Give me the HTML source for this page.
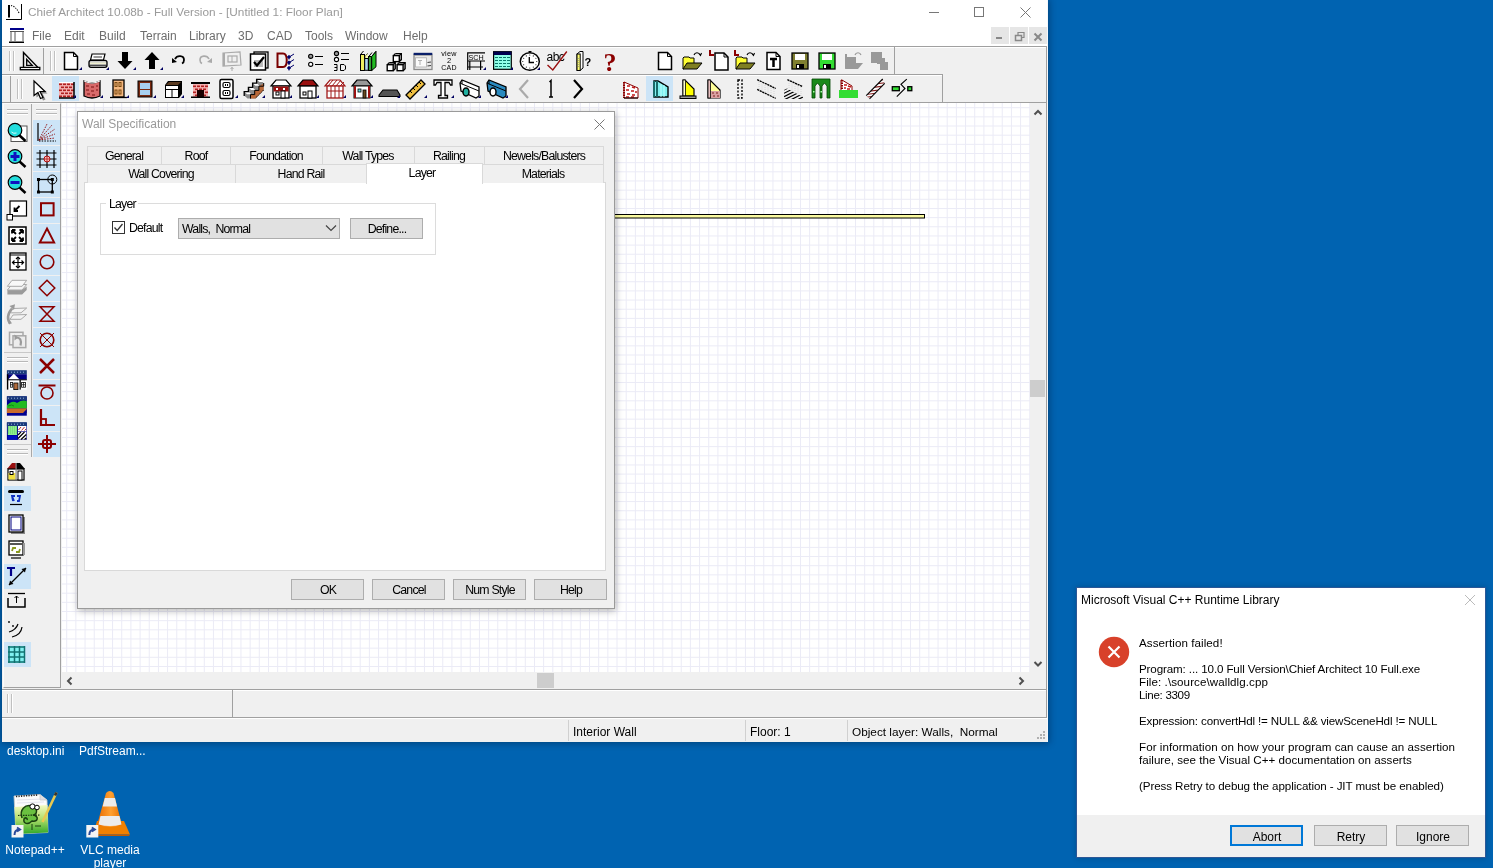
<!DOCTYPE html><html><head><meta charset="utf-8"><style>
html,body{margin:0;padding:0;}
body{width:1493px;height:868px;overflow:hidden;position:relative;background:#0063b1;font-family:"Liberation Sans", sans-serif;}
div{box-sizing:border-box;}
svg{position:absolute;overflow:visible;}
.t{will-change:transform;}
</style></head><body>
<div style="position:absolute;left:2px;top:0px;width:1046px;height:742px;background:#f0f0f0;box-shadow:0 0 7px 1px rgba(0,20,50,0.45);"></div>
<div style="position:absolute;left:1047px;top:0px;width:1px;height:742px;background:#f4f8fc;"></div>
<div style="position:absolute;left:2px;top:0px;width:1045px;height:46px;background:#fff;"></div>
<svg style="left:0px;top:0px;" width="30" height="24" viewBox="0 0 30 24"><path d="M9,5 L9,17.5" stroke="#000" stroke-width="2"/><path d="M6,19.5 L21.5,19.5 L21.5,4" fill="none" stroke="#000" stroke-width="1"/><path d="M11,5.5 Q16,6.5 19,13" fill="none" stroke="#000" stroke-width="1.1" stroke-dasharray="1.2 1.3"/></svg>
<div class="t" style="position:absolute;left:27.5px;top:7.02px;font-size:11.8px;line-height:11.8px;height:14.2px;color:#9a9a9a;white-space:pre;">Chief Architect 10.08b - Full Version - [Untitled 1: Floor Plan]</div>
<div style="position:absolute;left:929px;top:12px;width:10px;height:1px;background:#777;"></div>
<div style="position:absolute;left:974px;top:7px;width:10px;height:10px;border:1px solid #777;"></div>
<svg style="left:1020px;top:7px;" width="11" height="11" viewBox="0 0 11 11"><path d="M0.5,0.5 L10.5,10.5 M10.5,0.5 L0.5,10.5" stroke="#777" stroke-width="1"/></svg>
<svg style="left:8px;top:27px;" width="18" height="17" viewBox="0 0 18 17"><rect x="2" y="1" width="14" height="2" fill="#00008b"/><path d="M2,4.5 L16,4.5 M3,4.5 L3,14 M7,4.5 L7,14 M15,4.5 L15,14" stroke="#555" stroke-width="1"/><rect x="1" y="14.5" width="15" height="1.5" fill="#000"/></svg>
<div class="t" style="position:absolute;left:31.8px;top:29.94px;font-size:12px;line-height:12px;height:14.4px;color:#6d6d6d;white-space:pre;">File</div>
<div class="t" style="position:absolute;left:63.7px;top:29.94px;font-size:12px;line-height:12px;height:14.4px;color:#6d6d6d;white-space:pre;">Edit</div>
<div class="t" style="position:absolute;left:98.6px;top:29.94px;font-size:12px;line-height:12px;height:14.4px;color:#6d6d6d;white-space:pre;">Build</div>
<div class="t" style="position:absolute;left:139.6px;top:29.94px;font-size:12px;line-height:12px;height:14.4px;color:#6d6d6d;white-space:pre;">Terrain</div>
<div class="t" style="position:absolute;left:188.5px;top:29.94px;font-size:12px;line-height:12px;height:14.4px;color:#6d6d6d;white-space:pre;">Library</div>
<div class="t" style="position:absolute;left:238px;top:29.94px;font-size:12px;line-height:12px;height:14.4px;color:#6d6d6d;white-space:pre;">3D</div>
<div class="t" style="position:absolute;left:266.6px;top:29.94px;font-size:12px;line-height:12px;height:14.4px;color:#6d6d6d;white-space:pre;">CAD</div>
<div class="t" style="position:absolute;left:305.4px;top:29.94px;font-size:12px;line-height:12px;height:14.4px;color:#6d6d6d;white-space:pre;">Tools</div>
<div class="t" style="position:absolute;left:345.4px;top:29.94px;font-size:12px;line-height:12px;height:14.4px;color:#6d6d6d;white-space:pre;">Window</div>
<div class="t" style="position:absolute;left:403.4px;top:29.94px;font-size:12px;line-height:12px;height:14.4px;color:#6d6d6d;white-space:pre;">Help</div>
<div style="position:absolute;left:991px;top:27px;width:17.5px;height:17px;background:#e6e6e6;"></div>
<div style="position:absolute;left:1010px;top:27px;width:17.5px;height:17px;background:#e6e6e6;"></div>
<div style="position:absolute;left:1029px;top:27px;width:17.5px;height:17px;background:#e6e6e6;"></div>
<div style="position:absolute;left:996px;top:37px;width:6px;height:2px;background:#888;"></div>
<svg style="left:1014px;top:31px;" width="12" height="11" viewBox="0 0 12 11"><rect x="1.5" y="4.5" width="6" height="5" fill="none" stroke="#888" stroke-width="1.5"/><path d="M4,4 L4,1.5 L10,1.5 L10,6.5 L8,6.5" fill="none" stroke="#888" stroke-width="1.2"/></svg>
<svg style="left:1033px;top:32px;" width="10" height="10" viewBox="0 0 10 10"><path d="M1.5,1.5 L8.5,8.5 M8.5,1.5 L1.5,8.5" stroke="#888" stroke-width="2"/></svg>
<div style="position:absolute;left:2px;top:46px;width:1045px;height:1px;background:#a0a0a0;"></div>
<div style="position:absolute;left:2px;top:47px;width:1044px;height:1px;background:#fff;"></div>
<div style="position:absolute;left:2px;top:74px;width:941px;height:1px;background:#a0a0a0;"></div>
<div style="position:absolute;left:2px;top:75px;width:940px;height:1px;background:#fff;"></div>
<div style="position:absolute;left:894px;top:47px;width:1px;height:28px;background:#a0a0a0;"></div>
<div style="position:absolute;left:942px;top:74px;width:1px;height:28px;background:#a0a0a0;"></div>
<div style="position:absolute;left:1046px;top:47px;width:1px;height:56px;background:#a0a0a0;"></div>
<div style="position:absolute;left:2px;top:102px;width:1045px;height:1px;background:#a0a0a0;"></div>
<div style="position:absolute;left:43px;top:48px;width:1px;height:26px;background:#a0a0a0;"></div>
<div style="position:absolute;left:10px;top:76px;width:1px;height:26px;background:#a0a0a0;"></div>
<div style="position:absolute;left:9px;top:51px;width:1px;height:20px;background:#c0c0c0;"></div><div style="position:absolute;left:10px;top:51px;width:1px;height:20px;background:#fff;"></div><div style="position:absolute;left:13px;top:51px;width:1px;height:20px;background:#c0c0c0;"></div><div style="position:absolute;left:14px;top:51px;width:1px;height:20px;background:#fff;"></div>
<div style="position:absolute;left:50px;top:51px;width:1px;height:20px;background:#c0c0c0;"></div><div style="position:absolute;left:51px;top:51px;width:1px;height:20px;background:#fff;"></div><div style="position:absolute;left:54px;top:51px;width:1px;height:20px;background:#c0c0c0;"></div><div style="position:absolute;left:55px;top:51px;width:1px;height:20px;background:#fff;"></div>
<div style="position:absolute;left:17px;top:79px;width:1px;height:20px;background:#c0c0c0;"></div><div style="position:absolute;left:18px;top:79px;width:1px;height:20px;background:#fff;"></div><div style="position:absolute;left:21px;top:79px;width:1px;height:20px;background:#c0c0c0;"></div><div style="position:absolute;left:22px;top:79px;width:1px;height:20px;background:#fff;"></div>
<div style="position:absolute;left:52px;top:76px;width:27px;height:25px;background:#cce4f7;"></div>
<div style="position:absolute;left:646px;top:76px;width:27px;height:25px;background:#cce4f7;"></div>
<svg style="left:18px;top:49px;" width="24" height="24" viewBox="0 0 24 24"><path d="M5.5,3.5 L5.5,18.6 L20,18.6 Z" fill="none" stroke="#000" stroke-width="1.4" stroke-linejoin="miter"/><path d="M8.7,10.5 L8.7,16.4 L14.2,16.4 Z" fill="none" stroke="#000" stroke-width="1.3"/><rect x="2.3" y="18.4" width="19.5" height="2.3" fill="#fff" stroke="#000" stroke-width="1.3"/></svg>
<svg style="left:59px;top:49px;" width="24" height="24" viewBox="0 0 24 24"><path d="M5.5,3.5 L14.5,3.5 L18.5,7.5 L18.5,20.5 L5.5,20.5 Z" fill="#fff" stroke="#000" stroke-width="1.5"/><path d="M14.5,3.5 L14.5,7.5 L18.5,7.5" fill="none" stroke="#000" stroke-width="1"/><path d="M20,21 L23,21 L23,18 Z" fill="#000060"/></svg>
<svg style="left:86px;top:49px;" width="24" height="24" viewBox="0 0 24 24"><path d="M6,5 L19,5 L17.5,11 L4.5,11 Z" fill="#fff" stroke="#000" stroke-width="1.2"/><path d="M7.5,8 L16,8" stroke="#000" stroke-width="0.8"/><rect x="3" y="11.3" width="18" height="7" rx="2" fill="#c8c8c8" stroke="#000" stroke-width="1.3"/><rect x="4" y="13.5" width="16" height="1.6" fill="#f0f0d0"/><path d="M3.5,16.3 L20.5,16.3" stroke="#000" stroke-width="0.8"/><path d="M20,21 L23,21 L23,18 Z" fill="#000060"/></svg>
<svg style="left:113px;top:49px;" width="24" height="24" viewBox="0 0 24 24"><path d="M9,3 L15,3 L15,12 L19.5,12 L12,20 L4.5,12 L9,12 Z" fill="#000"/><path d="M20,21 L23,21 L23,18 Z" fill="#000060"/></svg>
<svg style="left:140px;top:49px;" width="24" height="24" viewBox="0 0 24 24"><path d="M12,3 L19.5,11 L15,11 L15,20 L9,20 L9,11 L4.5,11 Z" fill="#000"/><path d="M20,21 L23,21 L23,18 Z" fill="#000060"/></svg>
<svg style="left:167px;top:49px;" width="24" height="24" viewBox="0 0 24 24"><path d="M8,10 C10,6 17,6 17,11 C17,13 16,14 15,14.5" fill="none" stroke="#000" stroke-width="1.8"/><path d="M5,9 L10,13 L5,14 Z" fill="#000"/></svg>
<svg style="left:193px;top:49px;" width="24" height="24" viewBox="0 0 24 24"><path d="M16,10 C14,6 7,6 7,11 C7,13 8,14 9,14.5" fill="none" stroke="#aaa" stroke-width="1.6"/><path d="M19,9 L14,13 L19,14 Z" fill="#aaa"/></svg>
<svg style="left:220px;top:49px;" width="24" height="24" viewBox="0 0 24 24"><path d="M3,4 L20,3 L21,16 L3,17 Z" fill="none" stroke="#aaa" stroke-width="1.2"/><rect x="3" y="4" width="2" height="13" fill="#aaa"/><rect x="8" y="7" width="9" height="6" fill="none" stroke="#aaa" stroke-width="1.2"/><line x1="12" y1="7" x2="12" y2="13" stroke="#aaa"/><path d="M12,18 L12,22 M10.5,20 L12,18.5 L13.5,20" stroke="#aaa" fill="none"/></svg>
<svg style="left:247px;top:49px;" width="24" height="24" viewBox="0 0 24 24"><rect x="7" y="3" width="14" height="16" fill="#fff" stroke="#000" stroke-width="1.3"/><rect x="3.5" y="5" width="15" height="16" fill="#fff" stroke="#000" stroke-width="1.5"/><rect x="7" y="11" width="9" height="7" fill="#bbb"/><path d="M7,13 L10,16.5 L17,8" fill="none" stroke="#000" stroke-width="2.2"/></svg>
<svg style="left:274px;top:49px;" width="24" height="24" viewBox="0 0 24 24"><path d="M3.5,4.5 L9,4.5 C14,4.5 14,18 9,18 L3.5,18 Z" fill="none" stroke="#7a0000" stroke-width="2"/><g fill="#00006b" stroke="#00006b" stroke-width="1"><circle cx="15" cy="8" r="1.3"/><circle cx="15" cy="13.5" r="1.3"/><circle cx="15" cy="19" r="1.3"/><path d="M15,9.5 L15,10.5 M15,15 L15,16 M15,20.5 L15,21.5" /><path d="M16,7.5 L20,5 M16,13 L20,10.5 M16,18.5 L20,16" fill="none"/></g></svg>
<svg style="left:301px;top:49px;" width="24" height="24" viewBox="0 0 24 24"><circle cx="9.7" cy="7.3" r="2.1" fill="#999" stroke="#000" stroke-width="1.1"/><circle cx="9.7" cy="15.3" r="2.1" fill="#fff" stroke="#000" stroke-width="1.1"/><path d="M14,7.5 L22,7.5 M14,15.5 L22,15.5" stroke="#000" stroke-width="1"/></svg>
<svg style="left:328px;top:49px;" width="24" height="24" viewBox="0 0 24 24"><circle cx="8.5" cy="4.5" r="2.1" fill="#999" stroke="#000" stroke-width="1.1"/><circle cx="8.5" cy="10.5" r="2.1" fill="#fff" stroke="#000" stroke-width="1.1"/><path d="M13,4.5 L21,4.5 M13,10.5 L21,10.5" stroke="#000" stroke-width="1"/><path d="M6,15.5 L9,15.5 L9,21.5 L6,21.5 M6.5,18.5 L9,18.5" fill="none" stroke="#000" stroke-width="1"/><path d="M12.5,15.5 L16,15.5 L17.5,17 L17.5,20 L16,21.5 L12.5,21.5 Z" fill="none" stroke="#000" stroke-width="1"/></svg>
<svg style="left:357px;top:49px;" width="24" height="24" viewBox="0 0 24 24"><path d="M3.5,5.5 L6.5,2 M7.5,9.5 L8,8 L10.5,4.5 M11.8,7.5 L15,3.5 M14.7,7.5 L19,2.2" stroke="#000" stroke-width="1" fill="none"/><path d="M8,8 L10.5,4.5 L10.5,9" fill="#ffff90"/><rect x="3.5" y="5.5" width="4" height="16" fill="#f0f060" stroke="#000" stroke-width="1"/><rect x="7.7" y="9.5" width="3.6" height="11.8" fill="#b0d8f0" stroke="#000" stroke-width="1"/><rect x="11.5" y="7.5" width="3.2" height="14" fill="#3a9a3a" stroke="#000" stroke-width="1"/><path d="M14.7,7.5 L19,2.5 L19,17.8 L14.7,21.5 Z" fill="#22bb22" stroke="#000" stroke-width="1"/></svg>
<svg style="left:383.5px;top:49px;" width="24" height="24" viewBox="0 0 24 24"><path d="M11.3,4.6 L17.3,4.6 L17.3,10.6 L15.3,12.6" fill="none" stroke="#000" stroke-width="1.4"/><rect x="9.3" y="6.6" width="6" height="6" fill="#fff" stroke="#000" stroke-width="1.4"/><path d="M9.8,6.1 L11.3,4.6 M15.3,6.6 L17.3,4.6" stroke="#000" stroke-width="1.2"/><path d="M5.2,13.7 L11.2,13.7 L11.2,19.7 L9.2,21.7" fill="none" stroke="#000" stroke-width="1.4"/><rect x="3.2" y="15.7" width="6" height="6" fill="#fff" stroke="#000" stroke-width="1.4"/><path d="M3.7,15.2 L5.2,13.7 M9.2,15.7 L11.2,13.7" stroke="#000" stroke-width="1.2"/><path d="M15.1,13.7 L21.1,13.7 L21.1,19.7 L19.1,21.7" fill="none" stroke="#000" stroke-width="1.4"/><rect x="13.1" y="15.7" width="6" height="6" fill="#fff" stroke="#000" stroke-width="1.4"/><path d="M13.6,15.2 L15.1,13.7 M19.1,15.7 L21.1,13.7" stroke="#000" stroke-width="1.2"/></svg>
<svg style="left:410.5px;top:49px;" width="24" height="24" viewBox="0 0 24 24"><rect x="3" y="6" width="18" height="14.5" fill="#e8e8e8" stroke="#8a8a8a" stroke-width="1.3"/><rect x="2.6" y="3.8" width="18.7" height="2.2" fill="#0a1f6a"/><rect x="4.5" y="8.8" width="11" height="9.2" fill="#fafafa" stroke="#aaa" stroke-width="0.8"/><path d="M7,11.5 L11,11.5 M9,11.5 L9,16" stroke="#b0b0b0" stroke-width="1"/><path d="M16.5,13.5 L20,13 M16.5,17 L20,16.5" stroke="#444" stroke-width="1.2"/></svg>
<svg class="t" style="left:436px;top:49px;" width="24" height="24" viewBox="0 0 24 24"><text x="13" y="6.8" font-family="Liberation Sans" fill="#000" text-anchor="middle" font-size="7.2" letter-spacing="0.3">view</text><text x="13" y="14.3" font-family="Liberation Sans" fill="#000" text-anchor="middle" font-size="7.5">2</text><text x="13" y="21.2" font-family="Liberation Sans" fill="#000" text-anchor="middle" font-size="7" letter-spacing="0.2">CAD</text></svg>
<svg class="t" style="left:463px;top:49px;" width="24" height="24" viewBox="0 0 24 24"><path d="M4.7,3.8 L22,3.8 M4.7,3.3 L4.7,21 M4.7,12 L22,12 M4.7,18 L20,18 M6.8,12.5 L6.8,21 M17.6,12.5 L17.6,21" stroke="#000" stroke-width="1.2" fill="none"/><text x="13" y="10.6" text-anchor="middle" font-family="Liberation Sans" font-size="7.2" fill="#000">SCH</text><path d="M20,21 L23,21 L23,18 Z" fill="#000060"/></svg>
<svg style="left:490px;top:49px;" width="24" height="24" viewBox="0 0 24 24"><rect x="3.6" y="2.7" width="17.7" height="17.6" fill="#90ffe8" stroke="#000" stroke-width="1.2"/><rect x="3.6" y="2.7" width="17.7" height="3.3" fill="#000050"/><path d="M5,8.5 L20,8.5 M5,11.5 L20,11.5 M5,14.5 L20,14.5 M5,17.5 L20,17.5" stroke="#0a7a6a" stroke-width="1" stroke-dasharray="3 1"/><path d="M20,21 L23,21 L23,18 Z" fill="#000060"/></svg>
<svg style="left:517px;top:49px;" width="24" height="24" viewBox="0 0 24 24"><ellipse cx="12.8" cy="12.5" rx="9.5" ry="8.8" fill="#fff" stroke="#000" stroke-width="1.5"/><path d="M11.5,2.5 L14.5,2.5 M13,2.5 L13,4" stroke="#000" stroke-width="1.2"/><circle cx="12.8" cy="6.0" r="0.55" fill="#000"/><circle cx="16.3" cy="6.9" r="0.55" fill="#000"/><circle cx="18.9" cy="9.2" r="0.55" fill="#000"/><circle cx="19.8" cy="12.5" r="0.55" fill="#000"/><circle cx="18.9" cy="15.7" r="0.55" fill="#000"/><circle cx="16.3" cy="18.1" r="0.55" fill="#000"/><circle cx="12.8" cy="19.0" r="0.55" fill="#000"/><circle cx="9.3" cy="18.1" r="0.55" fill="#000"/><circle cx="6.7" cy="15.8" r="0.55" fill="#000"/><circle cx="5.8" cy="12.5" r="0.55" fill="#000"/><circle cx="6.7" cy="9.2" r="0.55" fill="#000"/><circle cx="9.3" cy="6.9" r="0.55" fill="#000"/><path d="M12.3,8 L12.3,13.5 L17,13.5" fill="none" stroke="#000" stroke-width="1.3"/><path d="M20,21 L23,21 L23,18 Z" fill="#000060"/></svg>
<svg class="t" style="left:544px;top:49px;" width="24" height="24" viewBox="0 0 24 24"><text x="2.5" y="12" font-family="Liberation Sans" font-size="12" letter-spacing="-0.5" fill="#000">abc</text><path d="M3.5,16.1 L8.8,21 L22.8,2.5" fill="none" stroke="#9a1010" stroke-width="1.4"/></svg>
<svg class="t" style="left:573px;top:49px;" width="24" height="24" viewBox="0 0 24 24"><path d="M4,5 L7,2.5 L10,2.5 L10,19 L7,21.5 L4,21.5 Z" fill="#fff" stroke="#000" stroke-width="1"/><rect x="4" y="5" width="3.2" height="16.5" fill="#ffff70" stroke="#000" stroke-width="1"/><path d="M5.5,9 L5.5,18" stroke="#999" stroke-width="0.8" stroke-dasharray="1 1"/><text x="11.5" y="17" font-family="Liberation Sans" font-weight="bold" font-size="11" fill="#000">?</text></svg>
<svg class="t" style="left:598px;top:49px;" width="24" height="24" viewBox="0 0 24 24"><text x="12" y="21.5" text-anchor="middle" font-family="Liberation Serif" font-weight="bold" font-size="26" fill="#8b0000">?</text></svg>
<svg style="left:653px;top:49px;" width="24" height="24" viewBox="0 0 24 24"><path d="M5.5,3.5 L14.5,3.5 L18.5,7.5 L18.5,20.5 L5.5,20.5 Z" fill="#fff" stroke="#000" stroke-width="1.5"/><path d="M14.5,3.5 L14.5,7.5 L18.5,7.5" fill="none" stroke="#000" stroke-width="1"/></svg>
<svg style="left:680px;top:49px;" width="24" height="24" viewBox="0 0 24 24"><path d="M3,9 L4,8 L9,8 L10,9 L14,9 L14,15 L3,20 Z" fill="#ffff33" stroke="#000" stroke-width="1"/><path d="M3,20 L7,14 L22,14 L17,20 Z" fill="#7f7f22" stroke="#000" stroke-width="1"/><path d="M14,6 C15,3 19,3 20,6 M19,4.5 L20.5,6.5 L21.5,4" fill="none" stroke="#000" stroke-width="1.1"/></svg>
<svg style="left:708px;top:49px;" width="24" height="24" viewBox="0 0 24 24"><path d="M2,1 L2,6 L6,6" fill="none" stroke="#8b0000" stroke-width="2"/><path d="M7,4 L16,4 L20,8 L20,21 L7,21 Z" fill="#fff" stroke="#000" stroke-width="1.5"/><path d="M16,4 L16,8 L20,8" fill="none" stroke="#000" stroke-width="1"/></svg>
<svg style="left:733px;top:49px;" width="24" height="24" viewBox="0 0 24 24"><path d="M2,1 L2,6 L6,6" fill="none" stroke="#8b0000" stroke-width="2"/><path d="M3,9 L4,8 L9,8 L10,9 L14,9 L14,15 L3,20 Z" fill="#ffff33" stroke="#000" stroke-width="1"/><path d="M3,20 L7,14 L22,14 L17,20 Z" fill="#7f7f22" stroke="#000" stroke-width="1"/><path d="M14,6 C15,3 19,3 20,6 M19,4.5 L20.5,6.5 L21.5,4" fill="none" stroke="#000" stroke-width="1.1"/></svg>
<svg style="left:761.5px;top:49px;" width="24" height="24" viewBox="0 0 24 24"><path d="M5,3.5 L14,3.5 L18,7.5 L18,20.5 L5,20.5 Z" fill="#fff" stroke="#000" stroke-width="1.5"/><path d="M14,3.5 L14,7.5 L18,7.5" fill="none" stroke="#000" stroke-width="1"/><path d="M8,10 L15,10 M11.5,10 L11.5,18" stroke="#000" stroke-width="2.5"/></svg>
<svg style="left:788px;top:49px;" width="24" height="24" viewBox="0 0 24 24"><rect x="4" y="4" width="16" height="16" fill="#7f7f30" stroke="#000" stroke-width="1.3"/><rect x="7" y="5" width="10" height="6" fill="#fff"/><rect x="8" y="15" width="8" height="5" fill="#000"/><rect x="9" y="16" width="2" height="3" fill="#fff"/></svg>
<svg style="left:815px;top:49px;" width="24" height="24" viewBox="0 0 24 24"><rect x="4" y="4" width="16" height="16" fill="#33dd33" stroke="#000" stroke-width="1.3"/><rect x="7" y="5" width="10" height="6" fill="#fff"/><rect x="8" y="15" width="8" height="5" fill="#000"/><rect x="9" y="16" width="2" height="3" fill="#fff"/></svg>
<svg style="left:841px;top:49px;" width="24" height="24" viewBox="0 0 24 24"><path d="M4,7 L4,5 L6,5 L6,8 L15,8 L15,14 L4,20 Z" fill="#999"/><path d="M4,20 L8,14 L22,14 L17,20 Z" fill="#999"/><path d="M14,6 C15,3 19,3 20,6" fill="none" stroke="#999" stroke-width="1.2"/></svg>
<svg style="left:868px;top:49px;" width="24" height="24" viewBox="0 0 24 24"><path d="M3,3 L14,3 L14,9 L17,9 L17,13 L20,13 L20,21 L12,21 L12,15 L9,15 L9,14 L3,14 Z" fill="#999"/></svg>
<svg style="left:27px;top:77px;" width="24" height="24" viewBox="0 0 24 24"><path d="M7,4 L19,15 L14,15 L17,21 L14.5,22 L12,16 L8,19 Z" fill="#888" transform="translate(1.5,1.5)"/><path d="M7,4 L18,14.5 L13,14.5 L16,20.5 L13.5,21.5 L11,15.5 L7,18.5 Z" fill="#fff" stroke="#000" stroke-width="1.2"/></svg>
<svg style="left:53px;top:77px;" width="24" height="24" viewBox="0 0 24 24"><rect x="6" y="5" width="15" height="16" fill="#f4b0b0"/><rect x="6" y="6.5" width="3" height="1.6" fill="#b02020"/><rect x="10" y="6.5" width="3" height="1.6" fill="#b02020"/><rect x="14" y="6.5" width="3" height="1.6" fill="#b02020"/><rect x="18" y="6.5" width="3" height="1.6" fill="#b02020"/><rect x="8" y="9.5" width="3" height="1.6" fill="#b02020"/><rect x="12" y="9.5" width="3" height="1.6" fill="#b02020"/><rect x="16" y="9.5" width="3" height="1.6" fill="#b02020"/><rect x="6" y="12.5" width="3" height="1.6" fill="#b02020"/><rect x="10" y="12.5" width="3" height="1.6" fill="#b02020"/><rect x="14" y="12.5" width="3" height="1.6" fill="#b02020"/><rect x="18" y="12.5" width="3" height="1.6" fill="#b02020"/><rect x="8" y="15.5" width="3" height="1.6" fill="#b02020"/><rect x="12" y="15.5" width="3" height="1.6" fill="#b02020"/><rect x="16" y="15.5" width="3" height="1.6" fill="#b02020"/><rect x="6" y="18.5" width="3" height="1.6" fill="#b02020"/><rect x="10" y="18.5" width="3" height="1.6" fill="#b02020"/><rect x="14" y="18.5" width="3" height="1.6" fill="#b02020"/><rect x="18" y="18.5" width="3" height="1.6" fill="#b02020"/><rect x="6" y="5" width="15" height="1" fill="#fff"/><path d="M21,5 L21,21 L6,21" fill="none" stroke="#000" stroke-width="1.5"/><path d="M20,21 L23,21 L23,18 Z" fill="#000060"/></svg>
<svg style="left:80px;top:77px;" width="24" height="24" viewBox="0 0 24 24"><path d="M4,4 Q12,8 20,4 L20,19 Q12,23 4,19 Z" fill="#d86a6a" stroke="#000" stroke-width="1.3"/><path d="M6,9 L9,9 M11,10 L14,10 M16,9 L18,9 M6,13 L9,13 M11,14 L14,14 M16,13 L18,13 M7,17 L10,17 M12,18 L15,18" stroke="#7a1010" stroke-width="1.2"/><path d="M4,4 Q12,8 20,4" fill="none" stroke="#fff" stroke-width="1"/><path d="M20,21 L23,21 L23,18 Z" fill="#000060"/></svg>
<svg style="left:106px;top:77px;" width="24" height="24" viewBox="0 0 24 24"><rect x="7" y="3" width="11" height="17" fill="#f5b880" stroke="#000" stroke-width="1.3"/><path d="M4,20.5 L21,20.5" stroke="#000" stroke-width="1.3"/><rect x="9" y="5.5" width="2" height="4" fill="none" stroke="#7a4a10"/><rect x="13" y="5.5" width="2" height="4" fill="none" stroke="#7a4a10"/><rect x="9" y="13" width="2" height="4" fill="none" stroke="#7a4a10"/><rect x="13" y="13" width="2" height="4" fill="none" stroke="#7a4a10"/><path d="M20,21 L23,21 L23,18 Z" fill="#000060"/></svg>
<svg style="left:133px;top:77px;" width="24" height="24" viewBox="0 0 24 24"><rect x="5" y="4" width="14" height="16" fill="#7a2a10" stroke="#000" stroke-width="1"/><rect x="7" y="6" width="10" height="6" fill="#a8d0f0"/><rect x="7" y="13" width="10" height="5" fill="#a8d0f0"/><path d="M20,21 L23,21 L23,18 Z" fill="#000060"/></svg>
<svg style="left:161px;top:77px;" width="24" height="24" viewBox="0 0 24 24"><path d="M4,8 L7,4 L21,4 L21,17 L18,21 L4,21 Z" fill="#000"/><path d="M5,8 L8,5 L20,5 L17,8 Z" fill="#5a3a20"/><rect x="5" y="9" width="12" height="3" fill="#fff"/><rect x="5" y="13" width="5.5" height="7" fill="#fff"/><rect x="11.5" y="13" width="5.5" height="7" fill="#fff"/><path d="M20,21 L23,21 L23,18 Z" fill="#000060"/></svg>
<svg style="left:188px;top:77px;" width="24" height="24" viewBox="0 0 24 24"><rect x="5" y="7" width="15" height="13" fill="#f4b0b0"/><rect x="5" y="8.5" width="3" height="1.6" fill="#b02020"/><rect x="9" y="8.5" width="3" height="1.6" fill="#b02020"/><rect x="13" y="8.5" width="3" height="1.6" fill="#b02020"/><rect x="17" y="8.5" width="3" height="1.6" fill="#b02020"/><rect x="7" y="11.5" width="3" height="1.6" fill="#b02020"/><rect x="11" y="11.5" width="3" height="1.6" fill="#b02020"/><rect x="15" y="11.5" width="3" height="1.6" fill="#b02020"/><rect x="5" y="14.5" width="3" height="1.6" fill="#b02020"/><rect x="9" y="14.5" width="3" height="1.6" fill="#b02020"/><rect x="13" y="14.5" width="3" height="1.6" fill="#b02020"/><rect x="17" y="14.5" width="3" height="1.6" fill="#b02020"/><rect x="7" y="17.5" width="3" height="1.6" fill="#b02020"/><rect x="11" y="17.5" width="3" height="1.6" fill="#b02020"/><rect x="15" y="17.5" width="3" height="1.6" fill="#b02020"/><rect x="3" y="5" width="19" height="2" fill="#000"/><rect x="9" y="13" width="7" height="7" fill="#1a0000"/><rect x="3" y="19.5" width="19" height="1.5" fill="#000"/></svg>
<svg style="left:215px;top:77px;" width="24" height="24" viewBox="0 0 24 24"><rect x="5" y="2.5" width="13" height="19" rx="1.5" fill="#fff" stroke="#000" stroke-width="1.5"/><rect x="8" y="5.5" width="7" height="5" rx="1.5" fill="none" stroke="#000" stroke-width="1.2"/><rect x="8" y="13.5" width="7" height="5" rx="1.5" fill="none" stroke="#000" stroke-width="1.2"/><path d="M10.5,7 L10.5,9 M12.5,7 L12.5,9 M10.5,15 L10.5,17 M12.5,15 L12.5,17" stroke="#000"/><path d="M20,21 L23,21 L23,18 Z" fill="#000060"/></svg>
<svg style="left:242px;top:77px;" width="24" height="24" viewBox="0 0 24 24"><path d="M2.2,14.6 L6.4,14.6 L6.4,10.4 L10.6,10.4 L10.6,6.2 L14.6,6.2 L14.6,2.3 L18.7,2.3 L21.7,6.5 L21.7,13 L13.3,21.4 L5.5,21.4 L2.2,18.5 Z" fill="#8a8a8a"/><path d="M2.2,14.6 L6.4,14.6 L9.2,17.2 L5.0,17.2 Z" fill="#fff"/><path d="M6.4,10.4 L10.600000000000001,10.4 L13.4,13.0 L9.2,13.0 Z" fill="#fff"/><path d="M10.6,6.2 L14.8,6.2 L17.6,8.8 L13.399999999999999,8.8 Z" fill="#fff"/><path d="M14.6,2.3 L18.8,2.3 L21.6,4.9 L17.4,4.9 Z" fill="#fff"/><path d="M8.5,21.4 L8.5,17.6 L12.7,17.6 L12.7,13.4 L16.9,13.4 L16.9,9.2 L21.7,6.5 L21.7,13 L13.3,21.4 Z" fill="#b86838"/><path d="M2.2,19 L2.2,14.6 L6.4,14.6 L6.4,10.4 L10.6,10.4 L10.6,6.2 L14.6,6.2 L14.6,2.3 L19.5,2.3" fill="none" stroke="#000" stroke-width="1.3"/><path d="M8.5,21.6 L8.5,17.6 L12.7,17.6 L12.7,13.4 L16.9,13.4 L16.9,9.2 L21.7,9.2 L21.7,6" fill="none" stroke="#000" stroke-width="1"/><path d="M21.7,13 L13.3,21.4" stroke="#000" stroke-width="1" stroke-dasharray="1.2 0.8"/><path d="M20,21 L23,21 L23,18 Z" fill="#000060"/></svg>
<svg style="left:269px;top:77px;" width="24" height="24" viewBox="0 0 24 24"><path d="M2,9 L7,3 L17,3 L22,9 Z" fill="#fff" stroke="#000" stroke-width="1.2"/><rect x="4" y="9" width="16" height="12" fill="#fff" stroke="#000" stroke-width="1.3"/><rect x="4.5" y="9.5" width="15" height="5" fill="#9a1010"/><rect x="7" y="11" width="2" height="2" fill="#fff"/><rect x="14" y="11" width="2" height="2" fill="#fff"/><rect x="7" y="15" width="3" height="3" fill="#fff" stroke="#000" stroke-width="1"/><rect x="12" y="14" width="4" height="7" fill="#fff" stroke="#000" stroke-width="1"/><path d="M20,21 L23,21 L23,18 Z" fill="#000060"/></svg>
<svg style="left:296px;top:77px;" width="24" height="24" viewBox="0 0 24 24"><path d="M2,9 L7,3 L17,3 L22,9 Z" fill="#9a1010" stroke="#000" stroke-width="1.2"/><rect x="4" y="9" width="16" height="12" fill="#fff" stroke="#000" stroke-width="1.3"/><rect x="7" y="15" width="3" height="3" fill="#fff" stroke="#000" stroke-width="1"/><rect x="12" y="14" width="4" height="7" fill="#fff" stroke="#000" stroke-width="1"/><path d="M20,21 L23,21 L23,18 Z" fill="#000060"/></svg>
<svg style="left:323px;top:77px;" width="24" height="24" viewBox="0 0 24 24"><path d="M2,9 L7,3 L17,3 L22,9 Z" fill="#fff" stroke="#a01818" stroke-width="1.2"/><path d="M5,9 L10,3 M9,9 L14,3 M13,9 L18,3 M17,9 L21,5" stroke="#a01818" stroke-width="1"/><rect x="4" y="9" width="16" height="12" fill="#fff" stroke="#a01818" stroke-width="1.3"/><path d="M8,9 L8,21 M12,9 L12,21 M16,9 L16,21 M4,14 L20,14" stroke="#a01818" stroke-width="1"/><path d="M20,21 L23,21 L23,18 Z" fill="#000060"/></svg>
<svg style="left:350px;top:77px;" width="24" height="24" viewBox="0 0 24 24"><path d="M2,9 L7,3 L17,3 L22,9 Z" fill="#999" stroke="#000" stroke-width="1.2"/><rect x="4" y="9" width="16" height="12" fill="#fff" stroke="#000" stroke-width="1"/><rect x="4" y="9" width="2" height="12" fill="#9a1010"/><rect x="18" y="9" width="2" height="12" fill="#9a1010"/><rect x="8" y="12" width="3" height="3" fill="#66dddd" stroke="#000" stroke-width="0.8"/><rect x="13" y="13" width="3" height="8" fill="#6a4a20" stroke="#000" stroke-width="0.8"/><path d="M20,21 L23,21 L23,18 Z" fill="#000060"/></svg>
<svg style="left:377px;top:77px;" width="24" height="24" viewBox="0 0 24 24"><path d="M2,18 L6,13 L20,13 L23,18 L23,19.5 L2,19.5 Z" fill="#555" stroke="#000" stroke-width="1.1"/><path d="M20,21 L23,21 L23,18 Z" fill="#000060"/></svg>
<svg style="left:404px;top:77px;" width="24" height="24" viewBox="0 0 24 24"><path d="M2,18 L17,3 L21,7 L6,22 Z" fill="#f0c040" stroke="#000" stroke-width="1.3"/><path d="M6,14 L8,16 M9,11 L11,13 M12,8 L14,10 M15,5 L17,7" stroke="#000" stroke-width="1"/><path d="M20,21 L23,21 L23,18 Z" fill="#000060"/></svg>
<svg style="left:431px;top:77px;" width="24" height="24" viewBox="0 0 24 24"><path d="M3,3 L21,3 L21,8 L19.5,8 L18,5.5 L14,5.5 L14,18.5 L16.5,18.5 L16.5,21 L7.5,21 L7.5,18.5 L10,18.5 L10,5.5 L6,5.5 L4.5,8 L3,8 Z" fill="#fff" stroke="#000" stroke-width="1.3"/><path d="M20,21 L23,21 L23,18 Z" fill="#000060"/></svg>
<svg style="left:458px;top:77px;" width="24" height="24" viewBox="0 0 24 24"><path d="M2,6 L4,3 L21,10 L21,19 L18,21 L3,14 Z" fill="#fff" stroke="#000" stroke-width="1.3"/><path d="M4,3 L4,7 L21,14 M2,6 L4,7" fill="none" stroke="#000" stroke-width="1"/><ellipse cx="8" cy="15" rx="3" ry="4" fill="#20b0a0" stroke="#000" stroke-width="1.5"/><path d="M20,21 L23,21 L23,18 Z" fill="#000060"/></svg>
<svg style="left:485px;top:77px;" width="24" height="24" viewBox="0 0 24 24"><path d="M2,6 L4,3 L21,10 L21,19 L18,21 L3,14 Z" fill="#2a8ac0" stroke="#000" stroke-width="1.3"/><path d="M4,3 L4,7 L21,14 M2,6 L4,7" fill="none" stroke="#000" stroke-width="1"/><ellipse cx="8" cy="15" rx="3" ry="4" fill="#fff" stroke="#000" stroke-width="1.5"/><path d="M20,21 L23,21 L23,18 Z" fill="#000060"/></svg>
<svg style="left:512px;top:77px;" width="24" height="24" viewBox="0 0 24 24"><path d="M16,3 L8,12 L16,21" fill="none" stroke="#aaa" stroke-width="2.2"/></svg>
<svg style="left:539px;top:77px;" width="24" height="24" viewBox="0 0 24 24"><path d="M10.5,5 L12,3.5 L12,20 M10,20 L14,20" fill="none" stroke="#000" stroke-width="1.5"/></svg>
<svg style="left:566px;top:77px;" width="24" height="24" viewBox="0 0 24 24"><path d="M8,3 L16,12 L8,21" fill="none" stroke="#000" stroke-width="2.2"/></svg>
<svg style="left:619px;top:77px;" width="24" height="24" viewBox="0 0 24 24"><path d="M5,5 L19,11 L19,21 L5,21 Z" fill="#fff" stroke="#8b0000" stroke-width="1"/><path d="M5,5 L5,21" stroke="#8b0000" stroke-width="2" stroke-dasharray="1.5 1"/><path d="M8,9 L11,9 M13,10 L16,11 M7,13 L10,13 M12,14 L15,14 M16,15 L18,15 M8,17 L11,17 M13,18 L16,18 M7,20 L10,20 M12,20 L15,20" stroke="#c01818" stroke-width="1.5"/><path d="M5,21 L19,21" stroke="#000" stroke-width="1"/></svg>
<svg style="left:648.5px;top:77px;" width="24" height="24" viewBox="0 0 24 24"><path d="M5,4 L9,4 L19,10 L19,20 L5,20 Z" fill="#80f0f0" stroke="#000" stroke-width="1.4"/><path d="M5,4 L5,20 M8,4 L8,20" stroke="#1a6a6a" stroke-width="2"/><path d="M12,7 L12,20 M15,8 L15,20" stroke="#c0ffff" stroke-width="1"/></svg>
<svg style="left:676.5px;top:77px;" width="24" height="24" viewBox="0 0 24 24"><path d="M6,3 L8,3 L17,12 L17,19 L6,19 Z" fill="#ffff00" stroke="#000" stroke-width="1.2"/><rect x="6" y="3" width="2.5" height="16" fill="#ffffd0" stroke="#000" stroke-width="0.8"/><rect x="3" y="19" width="16" height="2.5" fill="#999" stroke="#000" stroke-width="1"/></svg>
<svg style="left:702px;top:77px;" width="24" height="24" viewBox="0 0 24 24"><path d="M6,3 L8,3 L18,13 L18,21 L6,21 Z" fill="#ffff99" stroke="#000" stroke-width="1.2"/><rect x="6" y="3" width="2.5" height="18" fill="#e8c0c0" stroke="#000" stroke-width="0.8"/><rect x="9" y="14" width="9" height="7" fill="#d8a0a0"/><path d="M10,16 L12,16 M14,16 L16,16 M11,19 L13,19 M15,19 L17,19" stroke="#7a2020"/></svg>
<svg style="left:728px;top:77px;" width="24" height="24" viewBox="0 0 24 24"><rect x="10" y="3" width="4" height="18" fill="none" stroke="#000" stroke-width="1.4" stroke-dasharray="2 1.5"/></svg>
<svg style="left:755px;top:77px;" width="24" height="24" viewBox="0 0 24 24"><path d="M4,5 L4,13 M7,6.5 L7,14.5 M10,8 L10,16 M13,9.5 L13,17.5 M16,11 L16,19 M19,12 L19,20" stroke="#d4d4d4" stroke-width="0.9" stroke-dasharray="1 1"/><path d="M2.2,2.6 L20.7,11.5 M2.2,12.4 L20.7,21.4" stroke="#000" stroke-width="1.3" stroke-dasharray="2.2 0.6"/></svg>
<svg style="left:782px;top:77px;" width="24" height="24" viewBox="0 0 24 24"><path d="M7,4 L7,12 M10,5.5 L10,14 M13,7 L13,16 M16,8.5 L16,17 M19,10 L19,19" stroke="#d4d4d4" stroke-width="0.9" stroke-dasharray="1 1"/><path d="M5.4,2.6 L20.6,9.6" stroke="#000" stroke-width="1.4" stroke-dasharray="2.2 0.6"/><clipPath id="hc1"><path d="M2,13 L5,11.5 L21,20 L21,22 L2,22 Z"/></clipPath><g clip-path="url(#hc1)" stroke="#000" stroke-width="1.2"><path d="M2,13 L22,3"/><path d="M2,16.3 L22,6.300000000000001"/><path d="M2,19.6 L22,9.600000000000001"/><path d="M2,22.9 L22,12.899999999999999"/><path d="M2,26.2 L22,16.2"/><path d="M2,29.5 L22,19.5"/></g></svg>
<svg style="left:809px;top:77px;" width="24" height="24" viewBox="0 0 24 24"><path d="M3,2 L21,2 L21,21 L18,21 L18,9 L15.5,6 L13,9 L13,21 L11,21 L11,9 L8.5,6 L6,9 L6,21 L3,21 Z" fill="#1a8a1a" stroke="#004400" stroke-width="0.8"/><rect x="4" y="14" width="1.5" height="1.5" fill="#aaffaa"/><rect x="11.5" y="14" width="1.5" height="1.5" fill="#aaffaa"/></svg>
<svg style="left:836px;top:77px;" width="24" height="24" viewBox="0 0 24 24"><path d="M5,3 L6,3 L16,9 L16,15 L5,15 Z" fill="#fff" stroke="#8b0000" stroke-width="1"/><path d="M6,3 L6,15" stroke="#8b0000" stroke-width="2" stroke-dasharray="1.5 1"/><path d="M8,8 L11,8 M12,9 L15,10 M8,11 L10,11 M11,12 L14,12" stroke="#c01818" stroke-width="1.5"/><rect x="3" y="13" width="19" height="8" fill="#33dd33"/></svg>
<svg style="left:863px;top:77px;" width="24" height="24" viewBox="0 0 24 24"><clipPath id="hd1"><path d="M3.2,18.7 L19.7,2 L21.7,6.4 L6.5,21.9 Z"/></clipPath><path d="M3.2,18.7 L19.7,2 L21.7,6.4 L6.5,21.9 Z" fill="#fff"/><g clip-path="url(#hd1)"><path d="M1,5.2 L23,2.4" stroke="#801818" stroke-width="1.1"/><path d="M1,8.4 L23,5.6" stroke="#801818" stroke-width="1.1"/><path d="M1,11.6 L23,8.8" stroke="#801818" stroke-width="1.1"/><path d="M1,14.9 L23,12.1" stroke="#801818" stroke-width="1.1"/><path d="M1,17.7 L23,14.9" stroke="#801818" stroke-width="1.1"/><path d="M1,20.5 L23,17.7" stroke="#801818" stroke-width="1.1"/></g><path d="M3.2,18.7 L19.7,2 M6.5,21.9 L21.7,6.4" fill="none" stroke="#000" stroke-width="1.1"/></svg>
<svg style="left:890px;top:77px;" width="24" height="24" viewBox="0 0 24 24"><rect x="2.3" y="9.7" width="7" height="4" fill="#33dd33" stroke="#000" stroke-width="1.3"/><rect x="17.8" y="9.7" width="4" height="4" fill="#33dd33" stroke="#000" stroke-width="1.3"/><path d="M16.8,2.2 L11,7.4 L15,11.5 L6.8,19.7" fill="none" stroke="#000" stroke-width="1.1"/></svg>
<div style="position:absolute;left:3px;top:103px;width:58px;height:585px;background:#f0f0f0;border:1px solid #fbfbfb;border-right:1px solid #a0a0a0;border-bottom:1px solid #a0a0a0;"></div>
<div style="position:absolute;left:31px;top:104px;width:1px;height:353px;background:#a8a8a8;"></div>
<div style="position:absolute;left:7px;top:109px;width:21px;height:1px;background:#b8b8b8;"></div><div style="position:absolute;left:7px;top:110px;width:21px;height:1px;background:#fff;"></div><div style="position:absolute;left:7px;top:113px;width:21px;height:1px;background:#b8b8b8;"></div><div style="position:absolute;left:7px;top:114px;width:21px;height:1px;background:#fff;"></div>
<div style="position:absolute;left:36px;top:109px;width:21px;height:1px;background:#b8b8b8;"></div><div style="position:absolute;left:36px;top:110px;width:21px;height:1px;background:#fff;"></div><div style="position:absolute;left:36px;top:113px;width:21px;height:1px;background:#b8b8b8;"></div><div style="position:absolute;left:36px;top:114px;width:21px;height:1px;background:#fff;"></div>
<div style="position:absolute;left:7px;top:357px;width:21px;height:1px;background:#b8b8b8;"></div><div style="position:absolute;left:7px;top:358px;width:21px;height:1px;background:#fff;"></div><div style="position:absolute;left:7px;top:361px;width:21px;height:1px;background:#b8b8b8;"></div><div style="position:absolute;left:7px;top:362px;width:21px;height:1px;background:#fff;"></div>
<div style="position:absolute;left:7px;top:449px;width:21px;height:1px;background:#b8b8b8;"></div><div style="position:absolute;left:7px;top:450px;width:21px;height:1px;background:#fff;"></div><div style="position:absolute;left:7px;top:453px;width:21px;height:1px;background:#b8b8b8;"></div><div style="position:absolute;left:7px;top:454px;width:21px;height:1px;background:#fff;"></div>
<div style="position:absolute;left:4px;top:352px;width:27px;height:1px;background:#c8c8c8;"></div>
<div style="position:absolute;left:4px;top:444px;width:27px;height:1px;background:#c8c8c8;"></div>
<div style="position:absolute;left:33px;top:119.5px;width:27px;height:25px;background:#cce4f7;"></div>
<div style="position:absolute;left:33px;top:145.5px;width:27px;height:25px;background:#cce4f7;"></div>
<div style="position:absolute;left:33px;top:171.5px;width:27px;height:25px;background:#cce4f7;"></div>
<div style="position:absolute;left:33px;top:197.5px;width:27px;height:25px;background:#cce4f7;"></div>
<div style="position:absolute;left:33px;top:223.5px;width:27px;height:25px;background:#cce4f7;"></div>
<div style="position:absolute;left:33px;top:249.5px;width:27px;height:25px;background:#cce4f7;"></div>
<div style="position:absolute;left:33px;top:275.5px;width:27px;height:25px;background:#cce4f7;"></div>
<div style="position:absolute;left:33px;top:301.5px;width:27px;height:25px;background:#cce4f7;"></div>
<div style="position:absolute;left:33px;top:327.5px;width:27px;height:25px;background:#cce4f7;"></div>
<div style="position:absolute;left:33px;top:353.5px;width:27px;height:25px;background:#cce4f7;"></div>
<div style="position:absolute;left:33px;top:379.5px;width:27px;height:25px;background:#cce4f7;"></div>
<div style="position:absolute;left:33px;top:405.5px;width:27px;height:25px;background:#cce4f7;"></div>
<div style="position:absolute;left:33px;top:431.5px;width:27px;height:25px;background:#cce4f7;"></div>
<div style="position:absolute;left:4px;top:485.5px;width:27px;height:25px;background:#cce4f7;"></div>
<div style="position:absolute;left:4px;top:563.5px;width:27px;height:25px;background:#cce4f7;"></div>
<div style="position:absolute;left:4px;top:641.5px;width:27px;height:25px;background:#cce4f7;"></div>
<svg style="left:4px;top:120px;" width="24" height="24" viewBox="0 0 24 24"><rect x="7" y="6" width="16" height="15.5" fill="#fff" stroke="#555" stroke-width="1"/><path d="M15,15 L21.5,21" stroke="#000" stroke-width="2.5"/><circle cx="11" cy="10.2" r="6.8" fill="#22dddd" stroke="#000" stroke-width="1.2"/><path d="M7.5,12 Q9.5,14 12.5,13" fill="none" stroke="#fff" stroke-width="0.8"/></svg>
<svg style="left:4px;top:146px;" width="24" height="24" viewBox="0 0 24 24"><path d="M15,15 L21.5,21" stroke="#000" stroke-width="2.5"/><circle cx="11" cy="10.5" r="6.8" fill="#22dddd" stroke="#000" stroke-width="1.2"/><path d="M11,6 L11,15 M6.5,10.5 L15.5,10.5" stroke="#1010c0" stroke-width="3"/></svg>
<svg style="left:4px;top:172px;" width="24" height="24" viewBox="0 0 24 24"><path d="M15,15 L21.5,21" stroke="#000" stroke-width="2.5"/><circle cx="11" cy="10.5" r="6.8" fill="#22dddd" stroke="#000" stroke-width="1.2"/><rect x="6.5" y="9" width="9" height="3" fill="#1010c0"/></svg>
<svg style="left:4px;top:198px;" width="24" height="24" viewBox="0 0 24 24"><rect x="6" y="3" width="16.5" height="15" fill="#fff" stroke="#000" stroke-width="1.2"/><rect x="3" y="16.5" width="5.5" height="5.5" fill="#fff" stroke="#000" stroke-width="1"/><path d="M15.5,8 L10.5,13 M10.5,9.5 L10.5,13 L14,13" fill="none" stroke="#000" stroke-width="1.8"/></svg>
<svg style="left:5.5px;top:224px;" width="24" height="24" viewBox="0 0 24 24"><rect x="3" y="3" width="17" height="17" fill="#fff" stroke="#000" stroke-width="1.5"/><g stroke="#000" stroke-width="1.8" fill="none"><path d="M6,6 L10,10 M6,6 L6,9.5 M6,6 L9.5,6"/><path d="M17,6 L13,10 M17,6 L17,9.5 M17,6 L13.5,6"/><path d="M6,17 L10,13 M6,17 L6,13.5 M6,17 L9.5,17"/><path d="M17,17 L13,13 M17,17 L17,13.5 M17,17 L13.5,17"/></g></svg>
<svg style="left:5.5px;top:250px;" width="24" height="24" viewBox="0 0 24 24"><rect x="4" y="3" width="16" height="17" fill="#fff" stroke="#000" stroke-width="1.3"/><path d="M4,5 L20,5" stroke="#000" stroke-width="1"/><path d="M12,7 L12,18 M6.5,12.5 L17.5,12.5" stroke="#000" stroke-width="1.2"/><path d="M10,9 L12,7 L14,9 M10,16 L12,18 L14,16 M8.5,10.5 L6.5,12.5 L8.5,14.5 M15.5,10.5 L17.5,12.5 L15.5,14.5" fill="none" stroke="#000" stroke-width="1.2"/></svg>
<svg style="left:4px;top:276px;" width="24" height="24" viewBox="0 0 24 24"><path d="M3.4,14 L18.1,14 L22.7,10.5 L22.7,14 L18.1,18.6 L3.4,18.6 Z" fill="#9a9a9a"/><path d="M8,8.5 L22.7,8.5 L18.1,14 L3.4,14 Z" fill="#f4f4f4" stroke="#a8a8a8" stroke-width="1"/><path d="M8,4.3 L22.7,4.3 L18.1,10.3 L3.4,10.3 Z" fill="#f8f8f8" stroke="#a8a8a8" stroke-width="1"/></svg>
<svg style="left:4px;top:302px;" width="24" height="24" viewBox="0 0 24 24"><path d="M9,6.5 L22.7,6 L17,10.8 L6,10.8 Z" fill="#f4f4f4" stroke="#aaa" stroke-width="1"/><path d="M9,13 L22.7,12.5 L17,17.3 L6,17.3 Z" fill="#f4f4f4" stroke="#aaa" stroke-width="1"/><path d="M6.5,21.6 C3,18 3,12 8,6.5" fill="none" stroke="#9a9a9a" stroke-width="2.6"/><path d="M5.5,4 L11,2.3 L10,8 Z" fill="#9a9a9a"/><path d="M4,21.5 L8,21.5 L6,19 Z" fill="#9a9a9a"/></svg>
<svg style="left:4px;top:328px;" width="24" height="24" viewBox="0 0 24 24"><rect x="5.5" y="4.3" width="13.5" height="12.5" fill="none" stroke="#a8a8a8" stroke-width="1.5"/><rect x="9" y="7.8" width="12.8" height="11.8" fill="#ececec" stroke="#a8a8a8" stroke-width="1.5"/><path d="M12,9.5 Q18.5,9.5 16.5,17.5" fill="none" stroke="#9a9a9a" stroke-width="2.2"/><path d="M10.5,6.5 L14,9.5 L10.5,12.5 Z" fill="#9a9a9a"/></svg>
<svg style="left:4px;top:368px;" width="24" height="24" viewBox="0 0 24 24"><rect x="2.9" y="2.2" width="19.9" height="4" fill="#1a3a7a"/><path d="M4,4.2 L22,4.2" stroke="#9ab0e0" stroke-width="1" stroke-dasharray="1 2"/><rect x="2.9" y="6.2" width="19.9" height="5.6" fill="#000080"/><path d="M3.8,11.8 L9.8,5.8 L15.8,11.8 Z" fill="#fff"/><rect x="3.8" y="11.8" width="19" height="9.8" fill="#fff"/><rect x="2.9" y="6.2" width="1.4" height="15.4" fill="#000"/><path d="M3.8,11.8 L22.8,11.8" stroke="#000" stroke-width="1"/><rect x="6.1" y="14" width="2.8" height="5.6" fill="#000"/><rect x="6.8" y="14.8" width="1.4" height="1.6" fill="#fff"/><rect x="6.8" y="17.2" width="1.4" height="1.6" fill="#fff"/><rect x="9.8" y="15" width="4.2" height="6.6" fill="#b06a3a" stroke="#000" stroke-width="0.8"/><rect x="17.2" y="14" width="4.6" height="5.6" fill="#000"/><rect x="18" y="14.8" width="1.2" height="1.6" fill="#fff"/><rect x="19.8" y="14.8" width="1.2" height="1.6" fill="#fff"/><rect x="18" y="17.2" width="1.2" height="1.6" fill="#fff"/><rect x="19.8" y="17.2" width="1.2" height="1.6" fill="#fff"/><rect x="15.5" y="12" width="1.3" height="9.6" fill="#000"/></svg>
<svg style="left:4px;top:394px;" width="24" height="24" viewBox="0 0 24 24"><rect x="2.9" y="2.4" width="19.9" height="19.3" fill="#000090"/><rect x="2.9" y="2.2" width="19.9" height="4" fill="#1a3a7a"/><path d="M4,4.2 L22,4.2" stroke="#9ab0e0" stroke-width="1" stroke-dasharray="1 2"/><path d="M2.9,11.5 Q8,5.5 13,9 Q18,5.5 22.8,7 L22.8,14.4 L2.9,14.4 Z" fill="#22bb22"/><path d="M4,12 Q8,10 10,12" fill="none" stroke="#118811" stroke-width="1"/><rect x="2.9" y="14.4" width="19.9" height="4.6" fill="#c86a2a"/><path d="M19,19 L22.8,15 L22.8,19 Z" fill="#000090"/></svg>
<svg style="left:4px;top:420px;" width="24" height="24" viewBox="0 0 24 24"><rect x="2.9" y="2.7" width="19.9" height="17.2" fill="#000090"/><rect x="2.9" y="2.2" width="19.9" height="4" fill="#1a3a7a"/><path d="M4,4.2 L22,4.2" stroke="#9ab0e0" stroke-width="1" stroke-dasharray="1 2"/><rect x="3.8" y="6" width="9.3" height="9" fill="#8ef08e"/><path d="M4,7 L13,7 M4,9 L13,9 M4,11 L13,11 M4,13 L13,13" stroke="#5ac05a" stroke-width="0.8" stroke-dasharray="1 1"/><rect x="14" y="6" width="8.3" height="5.4" fill="#fff"/><path d="M14.5,10 L17,7 M17.5,10.5 L20.5,7 M20.5,10.5 L22,9" stroke="#c03030" stroke-width="1"/><rect x="14" y="12" width="8.3" height="7.5" fill="#fff"/><path d="M14,15 L17,12 M14,18.5 L20.5,12 M17,19.5 L22.3,14.5 M20.5,19.5 L22.3,18" stroke="#000" stroke-width="1.2"/><rect x="3.8" y="15.5" width="9.3" height="4" fill="#0010c0"/></svg>
<svg style="left:4px;top:460px;" width="24" height="24" viewBox="0 0 24 24"><path d="M3,9 L8,3 L12,3 L12,9 Z" fill="#9a1010"/><path d="M12,3 L16,3 L21,9 L12,9 Z" fill="#000"/><rect x="4" y="9" width="16" height="11" fill="#fff" stroke="#000" stroke-width="1.2"/><rect x="4.5" y="13" width="7" height="6.5" fill="#f0e040"/><rect x="6" y="11.5" width="3" height="3" fill="#fff" stroke="#000" stroke-width="1"/><rect x="14" y="11" width="4" height="9" fill="#fff" stroke="#000" stroke-width="1"/><rect x="11.5" y="3" width="1.2" height="17" fill="#888"/></svg>
<svg style="left:4px;top:486px;" width="24" height="24" viewBox="0 0 24 24"><rect x="4" y="4" width="16" height="3" rx="1.5" fill="#000"/><path d="M6,18.5 L18,18.5" stroke="#000" stroke-width="1.2"/><path d="M9,15 L8,10 L11,10 M8,10 L10,15" fill="none" stroke="#1030c0" stroke-width="1.8"/><path d="M13,10 L16,10 L15,15 L13,15" fill="none" stroke="#1030c0" stroke-width="1.8"/></svg>
<svg style="left:4px;top:512px;" width="24" height="24" viewBox="0 0 24 24"><rect x="7" y="5" width="14" height="17" fill="#888"/><rect x="5" y="3" width="14" height="17" fill="#fff" stroke="#000" stroke-width="1.3"/><rect x="7" y="5" width="10" height="13" fill="#fff" stroke="#000080" stroke-width="1"/></svg>
<svg style="left:4px;top:538px;" width="24" height="24" viewBox="0 0 24 24"><rect x="5" y="3" width="14" height="14" fill="#fff" stroke="#000" stroke-width="1.3"/><rect x="5" y="5" width="14" height="2" fill="#555"/><rect x="19" y="5" width="2" height="12" fill="#999"/><path d="M8,13 L9,10 L12,10 M16,11 L15,14 L12,14" fill="none" stroke="#8a9a20" stroke-width="1.8"/><path d="M7,20 L17,20" stroke="#000" stroke-width="1.2"/></svg>
<svg style="left:4px;top:564px;" width="24" height="24" viewBox="0 0 24 24"><path d="M3,4 L11,4 M7,4 L7,12" stroke="#00008b" stroke-width="2.2"/><path d="M5,21 L22,4" stroke="#000" stroke-width="1.2"/><path d="M5,21 L6,16.5 L9.5,20 Z M22,4 L17.5,5 L21,8.5 Z" fill="#000"/></svg>
<svg style="left:4px;top:590px;" width="24" height="24" viewBox="0 0 24 24"><path d="M4,3.5 L21,3.5" stroke="#000" stroke-width="1.3"/><path d="M4,8 L4,17 L21,17 L21,8" fill="none" stroke="#000" stroke-width="1.5"/><path d="M12.5,13 L12.5,6 M10.5,8 L12.5,6 L14.5,8" fill="none" stroke="#000" stroke-width="1"/></svg>
<svg style="left:4px;top:616px;" width="24" height="24" viewBox="0 0 24 24"><circle cx="5" cy="6" r="0.9" fill="#000"/><circle cx="9" cy="10" r="0.9" fill="#000"/><path d="M5,16 Q12,14 14,8" fill="none" stroke="#000" stroke-width="1.2"/><path d="M8,21 Q17,19 18,11" fill="none" stroke="#000" stroke-width="1.2"/></svg>
<svg style="left:4px;top:642px;" width="24" height="24" viewBox="0 0 24 24"><rect x="4" y="4" width="17" height="17" fill="#80f0f0"/><g stroke="#107070" stroke-width="1.5"><path d="M5,4 L5,21 M10.5,4 L10.5,21 M15.5,4 L15.5,21 M20.5,4 L20.5,21"/><path d="M4,5 L21,5 M4,10 L21,10 M4,15 L21,15 M4,20 L21,20"/></g></svg>
<svg style="left:34.5px;top:120px;" width="24" height="24" viewBox="0 0 24 24"><path d="M3,3 L3,21" stroke="#000" stroke-width="1.2"/><path d="M4,21 L21,21" stroke="#000" stroke-width="1" stroke-dasharray="1.5 1.2"/><path d="M4,20 L12,4 M4,20 L17,5 M4,20 L20,9 M4,20 L20,14 M4,20 L20,18" stroke="#8b0000" stroke-width="0.9" stroke-dasharray="1.5 1.2"/></svg>
<svg style="left:34.5px;top:146px;" width="24" height="24" viewBox="0 0 24 24"><path d="M5,4 L5,22 M12,4 L12,22 M19,4 L19,22 M1.5,7 L21.5,7 M1.5,13 L21.5,13 M1.5,19 L21.5,19" stroke="#000" stroke-width="1.2"/><circle cx="12" cy="13" r="3" fill="#f8c0c0" stroke="#b01010" stroke-width="1"/><path d="M12,10 L12,16 M9,13 L15,13" stroke="#b01010" stroke-width="0.8"/></svg>
<svg style="left:34.5px;top:172px;" width="24" height="24" viewBox="0 0 24 24"><rect x="3.5" y="7.5" width="13.8" height="12.5" fill="none" stroke="#000" stroke-width="1.3"/><circle cx="17.3" cy="7.5" r="4.5" fill="none" stroke="#000" stroke-width="1"/><rect x="2" y="6" width="3" height="3" fill="#000"/><rect x="15.8" y="6" width="3" height="3" fill="#000"/><rect x="2" y="18.5" width="3" height="3" fill="#000"/><rect x="15.8" y="18.5" width="3" height="3" fill="#000"/></svg>
<svg style="left:34.5px;top:198px;" width="24" height="24" viewBox="0 0 24 24"><rect x="6" y="5.2" width="12.6" height="12.2" fill="none" stroke="#8b0000" stroke-width="2"/></svg>
<svg style="left:34.5px;top:224px;" width="24" height="24" viewBox="0 0 24 24"><path d="M12,4.5 L19.2,18.5 L4.8,18.5 Z" fill="none" stroke="#8b0000" stroke-width="1.9" stroke-linejoin="miter"/></svg>
<svg style="left:34.5px;top:250px;" width="24" height="24" viewBox="0 0 24 24"><circle cx="12" cy="12" r="6.8" fill="none" stroke="#8b0000" stroke-width="1.6"/></svg>
<svg style="left:34.5px;top:276px;" width="24" height="24" viewBox="0 0 24 24"><path d="M12,4.2 L19.8,12 L12,19.8 L4.2,12 Z" fill="none" stroke="#8b0000" stroke-width="1.5"/></svg>
<svg style="left:34.5px;top:302px;" width="24" height="24" viewBox="0 0 24 24"><path d="M5,4.8 L19,4.8 L5,19.3 L19,19.3 Z" fill="none" stroke="#8b0000" stroke-width="1.5"/></svg>
<svg style="left:34.5px;top:328px;" width="24" height="24" viewBox="0 0 24 24"><circle cx="12" cy="12" r="6.8" fill="none" stroke="#8b0000" stroke-width="1.6"/><path d="M5,5 L19,19 M19,5 L5,19" stroke="#8b0000" stroke-width="1"/></svg>
<svg style="left:34.5px;top:354px;" width="24" height="24" viewBox="0 0 24 24"><path d="M5,5 L19,19 M19,5 L5,19" stroke="#8b0000" stroke-width="2.5"/></svg>
<svg style="left:34.5px;top:380px;" width="24" height="24" viewBox="0 0 24 24"><circle cx="12" cy="13" r="6" fill="none" stroke="#8b0000" stroke-width="1.6"/><path d="M3.5,5.5 L20.5,5.5" stroke="#8b0000" stroke-width="2"/></svg>
<svg style="left:34.5px;top:406px;" width="24" height="24" viewBox="0 0 24 24"><path d="M6,3 L6,19 L20,19" fill="none" stroke="#8b0000" stroke-width="2.2"/><rect x="6" y="13" width="5" height="6" fill="none" stroke="#8b0000" stroke-width="1.8"/></svg>
<svg style="left:34.5px;top:432px;" width="24" height="24" viewBox="0 0 24 24"><path d="M12,3 L12,21 M3,12 L21,12" stroke="#8b0000" stroke-width="2"/><rect x="8" y="8" width="8" height="8" rx="2" fill="none" stroke="#8b0000" stroke-width="2"/></svg>
<div style="position:absolute;left:62px;top:103px;width:968px;height:569px;background:#fff;overflow:hidden;"><svg style="left:0;top:0" width="968" height="569"><g stroke="#ebebf6" stroke-width="1"><line x1="4.70" y1="0" x2="4.70" y2="569" /><line x1="13.87" y1="0" x2="13.87" y2="569" /><line x1="23.04" y1="0" x2="23.04" y2="569" /><line x1="32.22" y1="0" x2="32.22" y2="569" /><line x1="41.39" y1="0" x2="41.39" y2="569" /><line x1="50.56" y1="0" x2="50.56" y2="569" /><line x1="59.73" y1="0" x2="59.73" y2="569" /><line x1="68.90" y1="0" x2="68.90" y2="569" /><line x1="78.08" y1="0" x2="78.08" y2="569" /><line x1="87.25" y1="0" x2="87.25" y2="569" /><line x1="96.42" y1="0" x2="96.42" y2="569" /><line x1="105.59" y1="0" x2="105.59" y2="569" /><line x1="114.76" y1="0" x2="114.76" y2="569" /><line x1="123.94" y1="0" x2="123.94" y2="569" /><line x1="133.11" y1="0" x2="133.11" y2="569" /><line x1="142.28" y1="0" x2="142.28" y2="569" /><line x1="151.45" y1="0" x2="151.45" y2="569" /><line x1="160.62" y1="0" x2="160.62" y2="569" /><line x1="169.80" y1="0" x2="169.80" y2="569" /><line x1="178.97" y1="0" x2="178.97" y2="569" /><line x1="188.14" y1="0" x2="188.14" y2="569" /><line x1="197.31" y1="0" x2="197.31" y2="569" /><line x1="206.48" y1="0" x2="206.48" y2="569" /><line x1="215.66" y1="0" x2="215.66" y2="569" /><line x1="224.83" y1="0" x2="224.83" y2="569" /><line x1="234.00" y1="0" x2="234.00" y2="569" /><line x1="243.17" y1="0" x2="243.17" y2="569" /><line x1="252.34" y1="0" x2="252.34" y2="569" /><line x1="261.52" y1="0" x2="261.52" y2="569" /><line x1="270.69" y1="0" x2="270.69" y2="569" /><line x1="279.86" y1="0" x2="279.86" y2="569" /><line x1="289.03" y1="0" x2="289.03" y2="569" /><line x1="298.20" y1="0" x2="298.20" y2="569" /><line x1="307.38" y1="0" x2="307.38" y2="569" /><line x1="316.55" y1="0" x2="316.55" y2="569" /><line x1="325.72" y1="0" x2="325.72" y2="569" /><line x1="334.89" y1="0" x2="334.89" y2="569" /><line x1="344.06" y1="0" x2="344.06" y2="569" /><line x1="353.24" y1="0" x2="353.24" y2="569" /><line x1="362.41" y1="0" x2="362.41" y2="569" /><line x1="371.58" y1="0" x2="371.58" y2="569" /><line x1="380.75" y1="0" x2="380.75" y2="569" /><line x1="389.92" y1="0" x2="389.92" y2="569" /><line x1="399.10" y1="0" x2="399.10" y2="569" /><line x1="408.27" y1="0" x2="408.27" y2="569" /><line x1="417.44" y1="0" x2="417.44" y2="569" /><line x1="426.61" y1="0" x2="426.61" y2="569" /><line x1="435.78" y1="0" x2="435.78" y2="569" /><line x1="444.96" y1="0" x2="444.96" y2="569" /><line x1="454.13" y1="0" x2="454.13" y2="569" /><line x1="463.30" y1="0" x2="463.30" y2="569" /><line x1="472.47" y1="0" x2="472.47" y2="569" /><line x1="481.64" y1="0" x2="481.64" y2="569" /><line x1="490.82" y1="0" x2="490.82" y2="569" /><line x1="499.99" y1="0" x2="499.99" y2="569" /><line x1="509.16" y1="0" x2="509.16" y2="569" /><line x1="518.33" y1="0" x2="518.33" y2="569" /><line x1="527.50" y1="0" x2="527.50" y2="569" /><line x1="536.68" y1="0" x2="536.68" y2="569" /><line x1="545.85" y1="0" x2="545.85" y2="569" /><line x1="555.02" y1="0" x2="555.02" y2="569" /><line x1="564.19" y1="0" x2="564.19" y2="569" /><line x1="573.36" y1="0" x2="573.36" y2="569" /><line x1="582.54" y1="0" x2="582.54" y2="569" /><line x1="591.71" y1="0" x2="591.71" y2="569" /><line x1="600.88" y1="0" x2="600.88" y2="569" /><line x1="610.05" y1="0" x2="610.05" y2="569" /><line x1="619.22" y1="0" x2="619.22" y2="569" /><line x1="628.40" y1="0" x2="628.40" y2="569" /><line x1="637.57" y1="0" x2="637.57" y2="569" /><line x1="646.74" y1="0" x2="646.74" y2="569" /><line x1="655.91" y1="0" x2="655.91" y2="569" /><line x1="665.08" y1="0" x2="665.08" y2="569" /><line x1="674.26" y1="0" x2="674.26" y2="569" /><line x1="683.43" y1="0" x2="683.43" y2="569" /><line x1="692.60" y1="0" x2="692.60" y2="569" /><line x1="701.77" y1="0" x2="701.77" y2="569" /><line x1="710.94" y1="0" x2="710.94" y2="569" /><line x1="720.12" y1="0" x2="720.12" y2="569" /><line x1="729.29" y1="0" x2="729.29" y2="569" /><line x1="738.46" y1="0" x2="738.46" y2="569" /><line x1="747.63" y1="0" x2="747.63" y2="569" /><line x1="756.80" y1="0" x2="756.80" y2="569" /><line x1="765.98" y1="0" x2="765.98" y2="569" /><line x1="775.15" y1="0" x2="775.15" y2="569" /><line x1="784.32" y1="0" x2="784.32" y2="569" /><line x1="793.49" y1="0" x2="793.49" y2="569" /><line x1="802.66" y1="0" x2="802.66" y2="569" /><line x1="811.84" y1="0" x2="811.84" y2="569" /><line x1="821.01" y1="0" x2="821.01" y2="569" /><line x1="830.18" y1="0" x2="830.18" y2="569" /><line x1="839.35" y1="0" x2="839.35" y2="569" /><line x1="848.52" y1="0" x2="848.52" y2="569" /><line x1="857.70" y1="0" x2="857.70" y2="569" /><line x1="866.87" y1="0" x2="866.87" y2="569" /><line x1="876.04" y1="0" x2="876.04" y2="569" /><line x1="885.21" y1="0" x2="885.21" y2="569" /><line x1="894.38" y1="0" x2="894.38" y2="569" /><line x1="903.56" y1="0" x2="903.56" y2="569" /><line x1="912.73" y1="0" x2="912.73" y2="569" /><line x1="921.90" y1="0" x2="921.90" y2="569" /><line x1="931.07" y1="0" x2="931.07" y2="569" /><line x1="940.24" y1="0" x2="940.24" y2="569" /><line x1="949.42" y1="0" x2="949.42" y2="569" /><line x1="958.59" y1="0" x2="958.59" y2="569" /><line x1="967.76" y1="0" x2="967.76" y2="569" /><line x1="0" y1="4.70" x2="968" y2="4.70" /><line x1="0" y1="13.86" x2="968" y2="13.86" /><line x1="0" y1="23.02" x2="968" y2="23.02" /><line x1="0" y1="32.18" x2="968" y2="32.18" /><line x1="0" y1="41.34" x2="968" y2="41.34" /><line x1="0" y1="50.50" x2="968" y2="50.50" /><line x1="0" y1="59.66" x2="968" y2="59.66" /><line x1="0" y1="68.82" x2="968" y2="68.82" /><line x1="0" y1="77.98" x2="968" y2="77.98" /><line x1="0" y1="87.14" x2="968" y2="87.14" /><line x1="0" y1="96.30" x2="968" y2="96.30" /><line x1="0" y1="105.46" x2="968" y2="105.46" /><line x1="0" y1="114.62" x2="968" y2="114.62" /><line x1="0" y1="123.78" x2="968" y2="123.78" /><line x1="0" y1="132.94" x2="968" y2="132.94" /><line x1="0" y1="142.10" x2="968" y2="142.10" /><line x1="0" y1="151.26" x2="968" y2="151.26" /><line x1="0" y1="160.42" x2="968" y2="160.42" /><line x1="0" y1="169.58" x2="968" y2="169.58" /><line x1="0" y1="178.74" x2="968" y2="178.74" /><line x1="0" y1="187.90" x2="968" y2="187.90" /><line x1="0" y1="197.06" x2="968" y2="197.06" /><line x1="0" y1="206.22" x2="968" y2="206.22" /><line x1="0" y1="215.38" x2="968" y2="215.38" /><line x1="0" y1="224.54" x2="968" y2="224.54" /><line x1="0" y1="233.70" x2="968" y2="233.70" /><line x1="0" y1="242.86" x2="968" y2="242.86" /><line x1="0" y1="252.02" x2="968" y2="252.02" /><line x1="0" y1="261.18" x2="968" y2="261.18" /><line x1="0" y1="270.34" x2="968" y2="270.34" /><line x1="0" y1="279.50" x2="968" y2="279.50" /><line x1="0" y1="288.66" x2="968" y2="288.66" /><line x1="0" y1="297.82" x2="968" y2="297.82" /><line x1="0" y1="306.98" x2="968" y2="306.98" /><line x1="0" y1="316.14" x2="968" y2="316.14" /><line x1="0" y1="325.30" x2="968" y2="325.30" /><line x1="0" y1="334.46" x2="968" y2="334.46" /><line x1="0" y1="343.62" x2="968" y2="343.62" /><line x1="0" y1="352.78" x2="968" y2="352.78" /><line x1="0" y1="361.94" x2="968" y2="361.94" /><line x1="0" y1="371.10" x2="968" y2="371.10" /><line x1="0" y1="380.26" x2="968" y2="380.26" /><line x1="0" y1="389.42" x2="968" y2="389.42" /><line x1="0" y1="398.58" x2="968" y2="398.58" /><line x1="0" y1="407.74" x2="968" y2="407.74" /><line x1="0" y1="416.90" x2="968" y2="416.90" /><line x1="0" y1="426.06" x2="968" y2="426.06" /><line x1="0" y1="435.22" x2="968" y2="435.22" /><line x1="0" y1="444.38" x2="968" y2="444.38" /><line x1="0" y1="453.54" x2="968" y2="453.54" /><line x1="0" y1="462.70" x2="968" y2="462.70" /><line x1="0" y1="471.86" x2="968" y2="471.86" /><line x1="0" y1="481.02" x2="968" y2="481.02" /><line x1="0" y1="490.18" x2="968" y2="490.18" /><line x1="0" y1="499.34" x2="968" y2="499.34" /><line x1="0" y1="508.50" x2="968" y2="508.50" /><line x1="0" y1="517.66" x2="968" y2="517.66" /><line x1="0" y1="526.82" x2="968" y2="526.82" /><line x1="0" y1="535.98" x2="968" y2="535.98" /><line x1="0" y1="545.14" x2="968" y2="545.14" /><line x1="0" y1="554.30" x2="968" y2="554.30" /><line x1="0" y1="563.46" x2="968" y2="563.46" /></g><rect x="540" y="111.5" width="322.5" height="3.5" fill="#fafaa0" stroke="#000" stroke-width="1"/></svg></div>
<div style="position:absolute;left:1030px;top:103px;width:16px;height:569px;background:#f0f0f0;"></div>
<div style="position:absolute;left:1046px;top:103px;width:1px;height:586px;background:#a0a0a0;"></div>
<div style="position:absolute;left:1030px;top:380px;width:15px;height:17px;background:#cdcdcd;"></div>
<svg style="left:1032px;top:107px;" width="12" height="10" viewBox="0 0 12 10"><path d="M2.5,7.5 L6,4 L9.5,7.5" fill="none" stroke="#505050" stroke-width="2"/></svg>
<svg style="left:1032px;top:659px;" width="12" height="10" viewBox="0 0 12 10"><path d="M2.5,3 L6,6.5 L9.5,3" fill="none" stroke="#505050" stroke-width="2"/></svg>
<div style="position:absolute;left:62px;top:672px;width:968px;height:17px;background:#f0f0f0;"></div>
<div style="position:absolute;left:537px;top:673px;width:17px;height:15px;background:#cdcdcd;"></div>
<svg style="left:65px;top:675px;" width="10" height="12" viewBox="0 0 10 12"><path d="M6.5,2.5 L3,6 L6.5,9.5" fill="none" stroke="#505050" stroke-width="2"/></svg>
<svg style="left:1016px;top:675px;" width="10" height="12" viewBox="0 0 10 12"><path d="M3.5,2.5 L7,6 L3.5,9.5" fill="none" stroke="#505050" stroke-width="2"/></svg>
<div style="position:absolute;left:2px;top:689px;width:1045px;height:1px;background:#a0a0a0;"></div>
<div style="position:absolute;left:2px;top:690px;width:1044px;height:1px;background:#fff;"></div>
<div style="position:absolute;left:1046px;top:689px;width:1px;height:29px;background:#a0a0a0;"></div>
<div style="position:absolute;left:7px;top:694px;width:1px;height:19px;background:#c0c0c0;"></div><div style="position:absolute;left:8px;top:694px;width:1px;height:19px;background:#fff;"></div><div style="position:absolute;left:11px;top:694px;width:1px;height:19px;background:#c0c0c0;"></div><div style="position:absolute;left:12px;top:694px;width:1px;height:19px;background:#fff;"></div>
<div style="position:absolute;left:232px;top:690px;width:1px;height:27px;background:#a0a0a0;"></div>
<div style="position:absolute;left:2px;top:717px;width:1045px;height:1px;background:#a0a0a0;"></div>
<div style="position:absolute;left:2px;top:718px;width:1045px;height:1px;background:#fff;"></div>
<div style="position:absolute;left:568px;top:720px;width:1px;height:21px;background:#d0d0d0;"></div>
<div style="position:absolute;left:745px;top:720px;width:1px;height:21px;background:#d0d0d0;"></div>
<div style="position:absolute;left:847px;top:720px;width:1px;height:21px;background:#d0d0d0;"></div>
<div class="t" style="position:absolute;left:573px;top:726.34px;font-size:12px;line-height:12px;height:14.4px;color:#000;white-space:pre;">Interior Wall</div>
<div class="t" style="position:absolute;left:750.4px;top:726.34px;font-size:12px;line-height:12px;height:14.4px;color:#000;white-space:pre;">Floor: 1</div>
<div class="t" style="position:absolute;left:852.2px;top:726.52px;font-size:11.8px;line-height:11.8px;height:14.2px;color:#000;white-space:pre;">Object layer: Walls,  Normal</div>
<svg style="left:1037px;top:731px;" width="9" height="9" viewBox="0 0 9 9"><g fill="#b0b0b0"><rect x="6" y="0" width="2" height="2"/><rect x="3" y="3" width="2" height="2"/><rect x="6" y="3" width="2" height="2"/><rect x="0" y="6" width="2" height="2"/><rect x="3" y="6" width="2" height="2"/><rect x="6" y="6" width="2" height="2"/></g></svg>
<div style="position:absolute;left:77px;top:111px;width:538px;height:498px;background:#f0f0f0;border:1px solid #9a9a9a;box-shadow:1px 2px 7px rgba(0,0,0,0.28);"></div>
<div style="position:absolute;left:78px;top:112px;width:536px;height:25px;background:#fff;"></div>
<div class="t" style="position:absolute;left:81.5px;top:117.64px;font-size:12px;line-height:12px;height:14.4px;color:#9a9a9a;white-space:pre;">Wall Specification</div>
<svg style="left:594px;top:119px;" width="11" height="11" viewBox="0 0 11 11"><path d="M0.5,0.5 L10.5,10.5 M10.5,0.5 L0.5,10.5" stroke="#777" stroke-width="1"/></svg>
<div style="position:absolute;left:84px;top:182px;width:522px;height:389px;background:#fff;border:1px solid #d9d9d9;"></div>
<div style="position:absolute;left:87px;top:146px;width:75px;height:18px;background:#f0f0f0;border:1px solid #d9d9d9;border-bottom:none;"></div>
<div class="t" style="position:absolute;left:-76.0px;width:400px;text-align:center;top:150.27px;font-size:12.3px;line-height:12.3px;height:14.8px;color:#000;white-space:pre;letter-spacing:-0.8px;">General</div>
<div style="position:absolute;left:161px;top:146px;width:70px;height:18px;background:#f0f0f0;border:1px solid #d9d9d9;border-bottom:none;"></div>
<div class="t" style="position:absolute;left:-4.5px;width:400px;text-align:center;top:150.27px;font-size:12.3px;line-height:12.3px;height:14.8px;color:#000;white-space:pre;letter-spacing:-0.8px;">Roof</div>
<div style="position:absolute;left:230px;top:146px;width:93px;height:18px;background:#f0f0f0;border:1px solid #d9d9d9;border-bottom:none;"></div>
<div class="t" style="position:absolute;left:76.0px;width:400px;text-align:center;top:150.27px;font-size:12.3px;line-height:12.3px;height:14.8px;color:#000;white-space:pre;letter-spacing:-0.8px;">Foundation</div>
<div style="position:absolute;left:322px;top:146px;width:93px;height:18px;background:#f0f0f0;border:1px solid #d9d9d9;border-bottom:none;"></div>
<div class="t" style="position:absolute;left:168.0px;width:400px;text-align:center;top:150.27px;font-size:12.3px;line-height:12.3px;height:14.8px;color:#000;white-space:pre;letter-spacing:-0.8px;">Wall Types</div>
<div style="position:absolute;left:414px;top:146px;width:71px;height:18px;background:#f0f0f0;border:1px solid #d9d9d9;border-bottom:none;"></div>
<div class="t" style="position:absolute;left:249.0px;width:400px;text-align:center;top:150.27px;font-size:12.3px;line-height:12.3px;height:14.8px;color:#000;white-space:pre;letter-spacing:-0.8px;">Railing</div>
<div style="position:absolute;left:484px;top:146px;width:120px;height:18px;background:#f0f0f0;border:1px solid #d9d9d9;border-bottom:none;"></div>
<div class="t" style="position:absolute;left:343.5px;width:400px;text-align:center;top:150.27px;font-size:12.3px;line-height:12.3px;height:14.8px;color:#000;white-space:pre;letter-spacing:-0.8px;">Newels/Balusters</div>
<div style="position:absolute;left:87px;top:164px;width:149px;height:19px;background:#f0f0f0;border:1px solid #d9d9d9;border-bottom:none;"></div>
<div class="t" style="position:absolute;left:-39.0px;width:400px;text-align:center;top:168.37px;font-size:12.3px;line-height:12.3px;height:14.8px;color:#000;white-space:pre;letter-spacing:-0.8px;">Wall Covering</div>
<div style="position:absolute;left:235px;top:164px;width:132px;height:19px;background:#f0f0f0;border:1px solid #d9d9d9;border-bottom:none;"></div>
<div class="t" style="position:absolute;left:100.5px;width:400px;text-align:center;top:168.37px;font-size:12.3px;line-height:12.3px;height:14.8px;color:#000;white-space:pre;letter-spacing:-0.8px;">Hand Rail</div>
<div style="position:absolute;left:482px;top:164px;width:122px;height:19px;background:#f0f0f0;border:1px solid #d9d9d9;border-bottom:none;"></div>
<div class="t" style="position:absolute;left:342.5px;width:400px;text-align:center;top:168.37px;font-size:12.3px;line-height:12.3px;height:14.8px;color:#000;white-space:pre;letter-spacing:-0.8px;">Materials</div>
<div style="position:absolute;left:366px;top:163px;width:117px;height:21px;background:#fff;border:1px solid #d9d9d9;border-bottom:none;"></div>
<div class="t" style="position:absolute;left:222px;width:400px;text-align:center;top:166.87px;font-size:12.3px;line-height:12.3px;height:14.8px;color:#000;white-space:pre;letter-spacing:-0.8px;">Layer</div>
<div style="position:absolute;left:100px;top:203px;width:336px;height:52px;border:1px solid #dcdcdc;"></div>
<div style="position:absolute;left:106px;top:196px;width:32px;height:12px;background:#fff;"></div>
<div class="t" style="position:absolute;left:108.5px;top:198.07px;font-size:12.3px;line-height:12.3px;height:14.8px;color:#000;white-space:pre;letter-spacing:-0.8px;">Layer</div>
<div style="position:absolute;left:112px;top:221px;width:13px;height:13px;background:#fff;border:1px solid #333;"></div>
<svg style="left:112px;top:221px;" width="13" height="13" viewBox="0 0 13 13"><path d="M2.5,6.5 L5.2,9.5 L10.5,3" fill="none" stroke="#333" stroke-width="1.3"/></svg>
<div class="t" style="position:absolute;left:128.5px;top:222.17px;font-size:12.3px;line-height:12.3px;height:14.8px;color:#000;white-space:pre;letter-spacing:-0.8px;">Default</div>
<div style="position:absolute;left:178px;top:218px;width:162px;height:21px;background:#e1e1e1;border:1px solid #adadad;"></div>
<div class="t" style="position:absolute;left:182px;top:222.87px;font-size:12.3px;line-height:12.3px;height:14.8px;color:#000;white-space:pre;letter-spacing:-0.8px;">Walls,  Normal</div>
<svg style="left:325px;top:224px;" width="12" height="8" viewBox="0 0 12 8"><path d="M1,1.5 L6,6.5 L11,1.5" fill="none" stroke="#444" stroke-width="1.2"/></svg>
<div style="position:absolute;left:350px;top:218px;width:73px;height:21px;background:#e1e1e1;border:1px solid #adadad;"></div>
<div class="t" style="position:absolute;left:186.5px;width:400px;text-align:center;top:222.87px;font-size:12.3px;line-height:12.3px;height:14.8px;color:#000;white-space:pre;letter-spacing:-0.8px;">Define...</div>
<div style="position:absolute;left:291px;top:579px;width:73px;height:21px;background:#e1e1e1;border:1px solid #adadad;"></div>
<div class="t" style="position:absolute;left:127.5px;width:400px;text-align:center;top:583.87px;font-size:12.3px;line-height:12.3px;height:14.8px;color:#000;white-space:pre;letter-spacing:-0.8px;">OK</div>
<div style="position:absolute;left:372px;top:579px;width:73px;height:21px;background:#e1e1e1;border:1px solid #adadad;"></div>
<div class="t" style="position:absolute;left:208.5px;width:400px;text-align:center;top:583.87px;font-size:12.3px;line-height:12.3px;height:14.8px;color:#000;white-space:pre;letter-spacing:-0.8px;">Cancel</div>
<div style="position:absolute;left:453px;top:579px;width:73px;height:21px;background:#e1e1e1;border:1px solid #adadad;"></div>
<div class="t" style="position:absolute;left:289.5px;width:400px;text-align:center;top:583.87px;font-size:12.3px;line-height:12.3px;height:14.8px;color:#000;white-space:pre;letter-spacing:-0.8px;">Num Style</div>
<div style="position:absolute;left:534px;top:579px;width:73px;height:21px;background:#e1e1e1;border:1px solid #adadad;"></div>
<div class="t" style="position:absolute;left:370.5px;width:400px;text-align:center;top:583.87px;font-size:12.3px;line-height:12.3px;height:14.8px;color:#000;white-space:pre;letter-spacing:-0.8px;">Help</div>
<div style="position:absolute;left:1076px;top:587px;width:410px;height:271px;background:#fff;border:1px solid #2b5797;box-shadow:0 0 6px rgba(0,0,0,0.2);"></div>
<div style="position:absolute;left:1077px;top:815px;width:408px;height:42px;background:#f0f0f0;"></div>
<div class="t" style="position:absolute;left:1080.6px;top:594.44px;font-size:12px;line-height:12px;height:14.4px;color:#000;white-space:pre;">Microsoft Visual C++ Runtime Library</div>
<svg style="left:1464px;top:594px;" width="12" height="12" viewBox="0 0 12 12"><path d="M1,1 L11,11 M11,1 L1,11" stroke="#bbb" stroke-width="1"/></svg>
<svg style="left:1098px;top:636px;" width="32" height="32" viewBox="0 0 32 32"><circle cx="16" cy="16" r="15.2" fill="#d8412a"/><path d="M10.5,10.5 L21.5,21.5 M21.5,10.5 L10.5,21.5" stroke="#fff" stroke-width="2.2"/></svg>
<div class="t" style="position:absolute;left:1139px;top:637.20px;font-size:11.6px;line-height:11.6px;height:13.9px;color:#000;white-space:pre;letter-spacing:0.07px;">Assertion failed!</div>
<div class="t" style="position:absolute;left:1139px;top:663.20px;font-size:11.6px;line-height:11.6px;height:13.9px;color:#000;white-space:pre;letter-spacing:-0.12px;">Program: ... 10.0 Full Version\Chief Architect 10 Full.exe</div>
<div class="t" style="position:absolute;left:1139px;top:676.20px;font-size:11.6px;line-height:11.6px;height:13.9px;color:#000;white-space:pre;letter-spacing:0.08px;">File: .\source\walldlg.cpp</div>
<div class="t" style="position:absolute;left:1139px;top:689.20px;font-size:11.6px;line-height:11.6px;height:13.9px;color:#000;white-space:pre;letter-spacing:-0.33px;">Line: 3309</div>
<div class="t" style="position:absolute;left:1139px;top:715.20px;font-size:11.6px;line-height:11.6px;height:13.9px;color:#000;white-space:pre;letter-spacing:-0.15px;">Expression: convertHdl != NULL &amp;&amp; viewSceneHdl != NULL</div>
<div class="t" style="position:absolute;left:1139px;top:741.20px;font-size:11.6px;line-height:11.6px;height:13.9px;color:#000;white-space:pre;letter-spacing:0.05px;">For information on how your program can cause an assertion</div>
<div class="t" style="position:absolute;left:1139px;top:754.20px;font-size:11.6px;line-height:11.6px;height:13.9px;color:#000;white-space:pre;letter-spacing:0.02px;">failure, see the Visual C++ documentation on asserts</div>
<div class="t" style="position:absolute;left:1139px;top:780.20px;font-size:11.6px;line-height:11.6px;height:13.9px;color:#000;white-space:pre;letter-spacing:-0.085px;">(Press Retry to debug the application - JIT must be enabled)</div>
<div style="position:absolute;left:1230px;top:825px;width:73px;height:21px;background:#e1e1e1;border:2px solid #0078d7;"></div>
<div style="position:absolute;left:1314px;top:825px;width:73px;height:21px;background:#e1e1e1;border:1px solid #adadad;"></div>
<div style="position:absolute;left:1396px;top:825px;width:73px;height:21px;background:#e1e1e1;border:1px solid #adadad;"></div>
<div class="t" style="position:absolute;left:1066.5px;width:400px;text-align:center;top:830.64px;font-size:12px;line-height:12px;height:14.4px;color:#000;white-space:pre;">Abort</div>
<div class="t" style="position:absolute;left:1150.5px;width:400px;text-align:center;top:830.64px;font-size:12px;line-height:12px;height:14.4px;color:#000;white-space:pre;">Retry</div>
<div class="t" style="position:absolute;left:1232.5px;width:400px;text-align:center;top:830.64px;font-size:12px;line-height:12px;height:14.4px;color:#000;white-space:pre;">Ignore</div>
<div class="t" style="position:absolute;left:6.7px;top:745.34px;font-size:12px;line-height:12px;height:14.4px;color:#fff;white-space:pre;">desktop.ini</div>
<div class="t" style="position:absolute;left:78.6px;top:745.34px;font-size:12px;line-height:12px;height:14.4px;color:#fff;white-space:pre;">PdfStream...</div>
<div class="t" style="position:absolute;left:-165.5px;width:400px;text-align:center;top:843.54px;font-size:12px;line-height:12px;height:14.4px;color:#fff;white-space:pre;">Notepad++</div>
<div class="t" style="position:absolute;left:-90.5px;width:400px;text-align:center;top:843.54px;font-size:12px;line-height:12px;height:14.4px;color:#fff;white-space:pre;">VLC media</div>
<div class="t" style="position:absolute;left:-90.5px;width:400px;text-align:center;top:857.14px;font-size:12px;line-height:12px;height:14.4px;color:#fff;white-space:pre;">player</div>
<svg style="left:8px;top:788px;" width="52" height="52" viewBox="0 0 52 52"><defs><linearGradient id="npg" x1="0" y1="0" x2="0" y2="1"><stop offset="0" stop-color="#f4fac0"/><stop offset="0.45" stop-color="#b8e070"/><stop offset="1" stop-color="#30a828"/></linearGradient><linearGradient id="vlg" x1="0" y1="0" x2="1" y2="0"><stop offset="0" stop-color="#e06800"/><stop offset="0.5" stop-color="#ffa020"/><stop offset="1" stop-color="#e07000"/></linearGradient></defs><path d="M6,8 L32,6.5 L39,12 L40,44.5 L8,46 Z" fill="#fbfbfb" stroke="#c8c8c8" stroke-width="0.8"/><path d="M6.5,19 L39.5,17 L40,44.5 L8,46 Z" fill="url(#npg)"/><path d="M32,6.5 L32,12 L39,12" fill="#e0e0e0" stroke="#bbb" stroke-width="0.6"/><path d="M8,8.5 L30,7" stroke="#222" stroke-width="1.6" stroke-dasharray="1.2 1.3"/><path d="M9,12 L36,11 M9,15 L36,14" stroke="#d8d8e8" stroke-width="0.7"/><path d="M14,30 C11,22 17,16 24,18 C29,19 30,25 26,27 C31,29 30,34 24,33 C20,37 15,36 16,31 C17,29 20,30 19,32" fill="#6ac040" stroke="#1a4010" stroke-width="1.5"/><circle cx="24.5" cy="18.5" r="2.6" fill="#fff" stroke="#000" stroke-width="1"/><circle cx="29" cy="19.5" r="2.3" fill="#fff" stroke="#000" stroke-width="1"/><path d="M10,27.5 L32,27" stroke="#1a3010" stroke-width="1.2" stroke-dasharray="1.5 1"/><path d="M24,36 L24,42 M27,38 L33,38" stroke="#1a4010" stroke-width="1"/><path d="M48.5,4.5 L34.5,34" stroke="#e8c850" stroke-width="2.6"/><path d="M48.5,4.5 L47,7.5" stroke="#333" stroke-width="2.6"/><rect x="3.5" y="37" width="12" height="12.5" fill="#f4f4f4"/><path d="M6.5,47 Q6.5,41.5 11.5,41.5 M9,39.5 L12,41.5 L9,43.5" fill="none" stroke="#2a4a9a" stroke-width="2"/></svg>
<svg style="left:84px;top:788px;" width="52" height="52" viewBox="0 0 52 52"><defs><linearGradient id="vlg2" x1="0" y1="0" x2="1" y2="0"><stop offset="0" stop-color="#e86a00"/><stop offset="0.55" stop-color="#ffa030"/><stop offset="1" stop-color="#e87000"/></linearGradient></defs><path d="M9,46.5 L13,33 L40,33 L46,46.5 Z" fill="#f08000"/><path d="M9,46.5 L46,46.5 L45,48 L10,48 Z" fill="#c05a00"/><path d="M22,5 Q25.8,1 29.5,5 L38,37 Q26,41 13,37 Z" fill="url(#vlg2)"/><path d="M20.8,10 L31,10 L33,18.5 L18.7,18.5 Z" fill="#ececec"/><path d="M16.5,28 L35.5,28 L37.5,36.5 Q26,39.5 14.5,36.5 Z" fill="#ececec"/><rect x="2.3" y="37" width="12" height="12.5" fill="#f4f4f4"/><path d="M5.3,47 Q5.3,41.5 10.3,41.5 M7.8,39.5 L10.8,41.5 L7.8,43.5" fill="none" stroke="#2a4a9a" stroke-width="2"/></svg>
</body></html>
